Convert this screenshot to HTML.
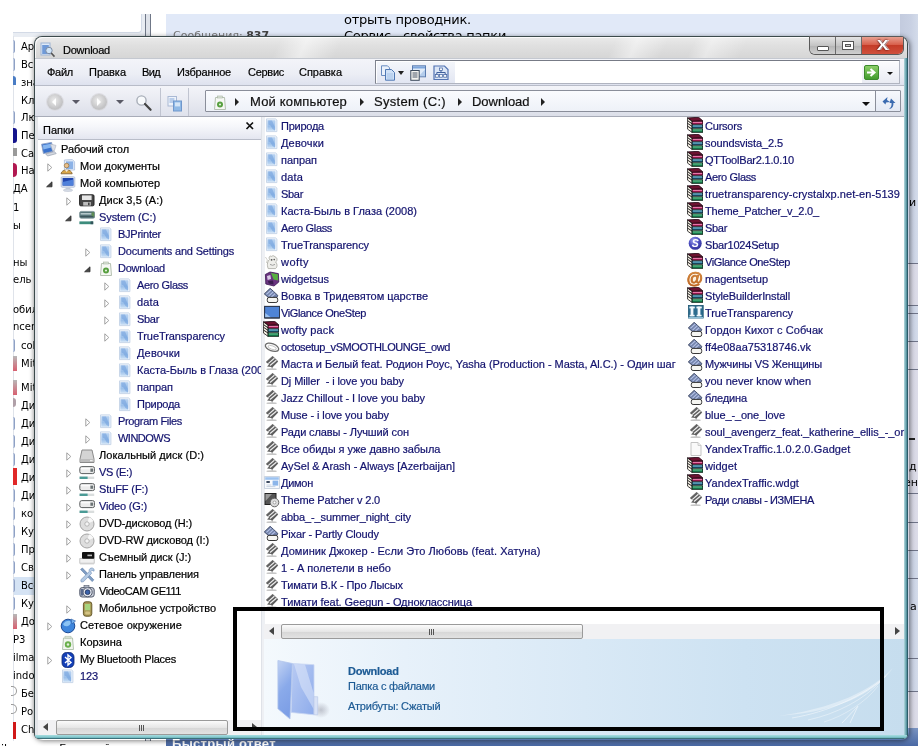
<!DOCTYPE html>
<html lang="ru"><head><meta charset="utf-8"><title>Download</title>
<style>
html,body{margin:0;padding:0;background:#fff;}
body{width:918px;height:746px;overflow:hidden;position:relative;font-family:"Liberation Sans",sans-serif;font-size:11px;}
#bg{will-change:transform;position:absolute;left:0;top:0;width:918px;height:746px;overflow:hidden}
.bt{position:absolute;white-space:nowrap;font-size:11px;line-height:16px;color:#000;font-family:"DejaVu Sans","Liberation Sans",sans-serif}
.t{position:absolute;white-space:pre;font-size:11px;line-height:15px;height:15px;-webkit-text-stroke:.2px currentColor}
.t.a{font-size:13px;line-height:20px;height:20px}
.ic{position:absolute;width:16px;height:16px;line-height:0}
#shadow{position:absolute;left:35px;top:38px;width:874px;height:702px;border-radius:8px;box-shadow:0 0 5px 1px rgba(0,0,0,.5)}
#win{will-change:transform;position:absolute;left:34px;top:36px;width:874px;height:703px;border-radius:8px 8px 5px 5px;background:#e4e6ea;overflow:hidden;box-shadow:inset 0 0 0 1px #3c4a4c}
#title{position:absolute;left:1px;top:1px;right:1px;height:21px;border-radius:7px 7px 0 0;box-shadow:inset 1px 1px 0 rgba(255,255,255,.8);background:linear-gradient(115deg,rgba(255,255,255,0) 28%,rgba(255,255,255,.5) 31%,rgba(255,255,255,0) 35%,rgba(255,255,255,0) 66%,rgba(255,255,255,.45) 68.5%,rgba(255,255,255,0) 72%,rgba(255,255,255,0) 75%,rgba(255,255,255,.4) 77%,rgba(255,255,255,0) 81%),linear-gradient(#eaeaea,#e0e0e0 40%,#d6d6d6)}
#capbtns{position:absolute;left:776px;top:1px;width:93px;height:17px;border-radius:0 0 5px 5px;box-shadow:0 0 0 1px #5a5a5a;overflow:hidden}
#bmin,#bmax,#bclose{position:absolute;top:0;height:17px}
#bmin{left:0;width:25px;background:linear-gradient(#e4e4e4,#c4c4c4 50%,#b4b4b4 51%,#cfcfcf);border-right:1px solid #6a6a6a}
#bmax{left:26px;width:25px;background:linear-gradient(#e4e4e4,#c4c4c4 50%,#b4b4b4 51%,#cfcfcf);border-right:1px solid #6a6a6a}
#bclose{left:52px;width:41px;background:linear-gradient(#e8a090,#d8604c 45%,#c43c28 50%,#d0503c)}
#bmin i{position:absolute;left:7px;top:9px;width:10px;height:3px;background:#fff;border:1px solid #555;border-radius:1px}
#bmax i{position:absolute;left:7px;top:5px;width:6px;height:3px;background:#ccc;border:2px solid #fff;outline:1px solid #555;box-shadow:inset 0 0 0 1px #555}
#bclose span{position:absolute;left:0;width:41px;text-align:center;top:-1px;font:bold 14px "Liberation Sans",sans-serif;color:#fff;text-shadow:0 0 2px #400,0 0 1px #400,1px 0 0 #fff;line-height:18px;transform:scaleX(1.25)}
#menubar{position:absolute;left:1px;top:22px;right:1px;height:27px;background:linear-gradient(#f3f4f9,#eceef5 55%,#dde1ee);border-top:1px solid #c4c8d0}
#menuwhite{position:absolute;left:341px;top:24px;width:523px;height:22px;background:#fff;border:1px solid #b0b4c0;border-top-color:#777b86;border-left-color:#80848f}
#gobtn{position:absolute;left:828px;top:26px;width:37px;height:21px;background:linear-gradient(#fbfbfd,#e9ebf3);}
#navbar{position:absolute;left:1px;top:49px;right:1px;height:30px;background:linear-gradient(#f3f4f9,#e6e8f0 60%,#dcdfe9);border-top:1px solid #b8bcc8;border-bottom:1px solid #a8acb8}
.navb{position:absolute;width:16px;height:16px;border-radius:50%;background:radial-gradient(circle at 45% 40%,#ececec,#c2c2c4 65%,#d4d4d8);box-shadow:0 0 0 1px #dcdce2}
.navb b{position:absolute;top:4px;width:0;height:0;border:4px solid transparent}
#foldersbtn{position:absolute;left:126px;top:52px;width:27px;height:28px;background:linear-gradient(#f2f3f8,#dfe2ec);border-left:1px solid #c0c4d0;border-right:1px solid #c0c4d0}
#addr{position:absolute;left:171px;top:54px;width:694px;height:20px;background:linear-gradient(#fafbfe,#eef1f8);border:1px solid #8a8e9a;border-radius:1px}
#refresh{position:absolute;left:841px;top:55px;width:24px;height:20px;border-left:1px solid #8a8e9a;background:linear-gradient(#f6f8fd,#e4e9f4)}
#content{position:absolute;left:4px;top:81px;right:4px;height:618px;background:#fff}
#fhead{position:absolute;left:4px;top:81px;width:223px;height:22px;background:linear-gradient(#ffffff,#f5f6fa 45%,#e4e6f0);border-bottom:1px solid #b9bdc9}
#split{position:absolute;left:227px;top:81px;width:3px;height:618px;background:#eef0f4;border-left:1px solid #dfe2e8}
.hs{position:absolute;height:15px;background:#f1f1f3}
.hth{position:absolute;top:0;height:13px;border:1px solid #9a9a9a;border-radius:2px;background:linear-gradient(#fbfbfb,#e6e6e6 50%,#d6d6d6 51%,#e2e2e2)}
.hth span{position:absolute;left:50%;top:4px;width:1px;height:6px;margin-left:-3px;background:#555;box-shadow:2px 0 0 #555,4px 0 0 #555}
.ar{position:absolute;top:3px;width:0;height:0;border:4px solid transparent}
.ar.l{left:5px;border-right:5px solid #444;border-left:none}
.ar.r{right:4px;border-left:5px solid #444;border-right:none}
#details{position:absolute;left:230px;top:603px;right:4px;height:96px;background:linear-gradient(90deg,#f4f9fd 0%,#e7f1fa 22%,#d9e9f6 50%,#cde2f2 75%,#c6ddee 100%)}
#treeclip{position:absolute;left:0;top:0;width:227px;height:684px;overflow:hidden}
#fr_r{position:absolute;right:0;top:22px;width:4px;bottom:0;background:linear-gradient(90deg,#b4d8de,#5c9aa6 60%,#173f4e)}
#fr_b{position:absolute;left:1px;right:1px;bottom:0;height:4px;background:linear-gradient(#a9dde0,#7cc4ca 60%,#1f4a56);border-radius:0 0 4px 4px}
#ann{position:absolute;left:233px;top:607px;width:643px;height:116px;border:4px solid #000}
</style></head>
<body>
<div id="bg">
<div style="position:absolute;left:13px;top:14px;width:137px;height:23px;background:#e9edf3"></div>
<div style="position:absolute;left:0px;top:0px;width:141px;height:32px;background:#fff;border-radius:0 0 4px 0;border-right:1px solid #d3dae6;border-bottom:1px solid #d3dae6"></div>
<div style="position:absolute;left:0px;top:0px;width:160px;height:14px;background:#fff"></div>
<div style="position:absolute;left:0px;top:0px;width:13px;height:40px;background:#fff"></div>
<div style="position:absolute;left:145px;top:14px;width:1px;height:732px;background:#6f7787"></div>
<div style="position:absolute;left:146px;top:14px;width:4px;height:732px;background:#dfe3ea"></div>
<div style="position:absolute;left:150px;top:14px;width:1px;height:732px;background:#6f7787"></div>
<div style="position:absolute;left:166px;top:14px;width:752px;height:732px;background:#e1e9f8"></div>
<div class="bt" style="left:173px;top:28px;color:#777;font-size:11px">Сообщения: <b style="color:#444">837</b></div>
<div class="bt" style="left:344px;top:12px;font-size:13px;letter-spacing:-.28px">отрыть проводник.</div>
<div class="bt" style="left:344px;top:28px;font-size:13px;letter-spacing:-.28px">Сервис - свойства папки</div>
<div style="position:absolute;left:13px;top:36px;width:1px;height:710px;background:#dfe3ea"></div>
<div class="bt" style="left:21px;top:39px;font-size:10px">Ар</div>
<div style="position:absolute;left:13px;top:40px;width:1px;height:13px;background:#c4cfe4;border-right:1px solid #8fa1c4;border-radius:0 2px 2px 0"></div>
<div class="bt" style="left:21px;top:57px;font-size:10px">Всп</div>
<div style="position:absolute;left:13px;top:58px;width:1px;height:13px;background:#c4cfe4;border-right:1px solid #8fa1c4;border-radius:0 2px 2px 0"></div>
<div class="bt" style="left:21px;top:75px;font-size:10px">зна</div>
<div style="position:absolute;left:13px;top:76px;width:3px;height:9px;background:#4a7cc4;border-radius:0 3px 0 0"></div>
<div class="bt" style="left:21px;top:93px;font-size:10px">Кл</div>
<div class="bt" style="left:21px;top:110px;font-size:10px">Лю</div>
<div style="position:absolute;left:13px;top:111px;width:1px;height:13px;background:#c4cfe4;border-right:1px solid #8fa1c4;border-radius:0 2px 2px 0"></div>
<div class="bt" style="left:21px;top:128px;font-size:10px">Пе</div>
<div style="position:absolute;left:13px;top:128px;width:4px;height:15px;background:#14148c;border-radius:0 3px 3px 0"></div>
<div class="bt" style="left:21px;top:146px;font-size:10px">Са</div>
<div style="position:absolute;left:13px;top:148px;width:4px;height:8px;background:#9a9a9a"></div>
<div class="bt" style="left:21px;top:163px;font-size:10px">На</div>
<div style="position:absolute;left:13px;top:163px;width:4px;height:14px;background:#b01850;border-radius:0 4px 4px 0"></div>
<div class="bt" style="left:13px;top:181px;font-size:10px">ДА</div>
<div class="bt" style="left:13px;top:200px;font-size:10px">1</div>
<div class="bt" style="left:13px;top:218px;font-size:10px">ы</div>
<div class="bt" style="left:13px;top:255px;font-size:10px">ны</div>
<div class="bt" style="left:13px;top:272px;font-size:10px">ель</div>
<div class="bt" style="left:13px;top:302px;font-size:10px">обил</div>
<div class="bt" style="left:13px;top:319px;font-size:10px">ncer</div>
<div class="bt" style="left:21px;top:338px;font-size:10px">col</div>
<div style="position:absolute;left:13px;top:339px;width:1px;height:13px;background:#c4cfe4;border-right:1px solid #8fa1c4;border-radius:0 2px 2px 0"></div>
<div class="bt" style="left:21px;top:356px;font-size:10px">Mit</div>
<div style="position:absolute;left:13px;top:356px;width:4px;height:15px;background:linear-gradient(#b8b8b8,#d86070)"></div>
<div class="bt" style="left:21px;top:380px;font-size:10px">Mit</div>
<div style="position:absolute;left:13px;top:380px;width:4px;height:15px;background:linear-gradient(#b8b8b8,#d86070)"></div>
<div class="bt" style="left:21px;top:398px;font-size:10px">Ди</div>
<div style="position:absolute;left:13px;top:398px;width:3px;height:9px;background:#b0a0a8;border-radius:0 4px 4px 0"></div>
<div class="bt" style="left:21px;top:416px;font-size:10px">Ди</div>
<div style="position:absolute;left:13px;top:417px;width:1px;height:13px;background:#c4cfe4;border-right:1px solid #8fa1c4;border-radius:0 2px 2px 0"></div>
<div class="bt" style="left:21px;top:434px;font-size:10px">Ди</div>
<div style="position:absolute;left:13px;top:435px;width:1px;height:13px;background:#c4cfe4;border-right:1px solid #8fa1c4;border-radius:0 2px 2px 0"></div>
<div class="bt" style="left:21px;top:452px;font-size:10px">Ди</div>
<div style="position:absolute;left:13px;top:453px;width:1px;height:13px;background:#c4cfe4;border-right:1px solid #8fa1c4;border-radius:0 2px 2px 0"></div>
<div class="bt" style="left:21px;top:470px;font-size:10px">Ди</div>
<div style="position:absolute;left:13px;top:468px;width:4px;height:17px;background:#e02828"></div>
<div class="bt" style="left:21px;top:488px;font-size:10px">Ди</div>
<div style="position:absolute;left:13px;top:489px;width:1px;height:13px;background:#c4cfe4;border-right:1px solid #8fa1c4;border-radius:0 2px 2px 0"></div>
<div class="bt" style="left:21px;top:506px;font-size:10px">ко.</div>
<div style="position:absolute;left:13px;top:507px;width:1px;height:13px;background:#c4cfe4;border-right:1px solid #8fa1c4;border-radius:0 2px 2px 0"></div>
<div class="bt" style="left:21px;top:524px;font-size:10px">Ку</div>
<div style="position:absolute;left:13px;top:525px;width:1px;height:13px;background:#c4cfe4;border-right:1px solid #8fa1c4;border-radius:0 2px 2px 0"></div>
<div class="bt" style="left:21px;top:542px;font-size:10px">Пр</div>
<div style="position:absolute;left:13px;top:543px;width:1px;height:13px;background:#c4cfe4;border-right:1px solid #8fa1c4;border-radius:0 2px 2px 0"></div>
<div class="bt" style="left:21px;top:560px;font-size:10px">Св</div>
<div style="position:absolute;left:13px;top:561px;width:1px;height:13px;background:#c4cfe4;border-right:1px solid #8fa1c4;border-radius:0 2px 2px 0"></div>
<div style="position:absolute;left:14px;top:577px;width:22px;height:18px;background:#d5e3f4"></div>
<div class="bt" style="left:21px;top:578px;font-size:10px">Все</div>
<div style="position:absolute;left:13px;top:579px;width:1px;height:13px;background:#c4cfe4;border-right:1px solid #8fa1c4;border-radius:0 2px 2px 0"></div>
<div class="bt" style="left:21px;top:596px;font-size:10px">Ку</div>
<div style="position:absolute;left:13px;top:597px;width:1px;height:13px;background:#c4cfe4;border-right:1px solid #8fa1c4;border-radius:0 2px 2px 0"></div>
<div class="bt" style="left:21px;top:614px;font-size:10px">До</div>
<div style="position:absolute;left:13px;top:614px;width:4px;height:15px;background:linear-gradient(#b8b8b8,#d86070)"></div>
<div class="bt" style="left:13px;top:632px;font-size:10px">Р3</div>
<div class="bt" style="left:13px;top:650px;font-size:10px">ilma</div>
<div class="bt" style="left:13px;top:668px;font-size:10px">indo</div>
<div class="bt" style="left:21px;top:686px;font-size:10px">Бе.</div>
<div style="position:absolute;left:11px;top:686px;width:5px;height:8px;border:1px solid #999;border-left:none;border-radius:0 5px 5px 0"></div>
<div class="bt" style="left:21px;top:704px;font-size:10px">Ро</div>
<div style="position:absolute;left:11px;top:704px;width:5px;height:8px;border:1px solid #999;border-left:none;border-radius:0 5px 5px 0"></div>
<div class="bt" style="left:21px;top:722px;font-size:10px">Ch</div>
<div style="position:absolute;left:13px;top:722px;width:3px;height:17px;background:#d01818"></div>
<div style="position:absolute;left:900px;top:14px;width:18px;height:732px;background:linear-gradient(90deg,#c3cbde,#c9d1e3 60%,#d3dbea)"></div>
<div style="position:absolute;left:900px;top:264px;width:18px;height:41px;background:linear-gradient(90deg,#d0d0de,#dcdce8)"></div>
<div style="position:absolute;left:900px;top:341px;width:18px;height:28px;background:linear-gradient(90deg,#d0d0de,#dcdce8)"></div>
<div style="position:absolute;left:900px;top:370px;width:18px;height:180px;background:linear-gradient(90deg,#d0d0de,#dcdce8)"></div>
<div style="position:absolute;left:900px;top:692px;width:18px;height:36px;background:linear-gradient(90deg,#d0d0de,#dcdce8)"></div>
<div style="position:absolute;left:908px;top:263px;width:10px;height:1px;background:#6f7488"></div>
<div style="position:absolute;left:908px;top:305px;width:10px;height:1px;background:#6f7488"></div>
<div style="position:absolute;left:908px;top:313px;width:10px;height:1px;background:#6f7488"></div>
<div style="position:absolute;left:908px;top:341px;width:10px;height:1px;background:#6f7488"></div>
<div style="position:absolute;left:908px;top:369px;width:10px;height:1px;background:#6f7488"></div>
<div style="position:absolute;left:908px;top:493px;width:10px;height:1px;background:#6f7488"></div>
<div style="position:absolute;left:908px;top:522px;width:10px;height:1px;background:#6f7488"></div>
<div style="position:absolute;left:908px;top:550px;width:10px;height:1px;background:#6f7488"></div>
<div style="position:absolute;left:908px;top:578px;width:10px;height:1px;background:#6f7488"></div>
<div style="position:absolute;left:908px;top:658px;width:10px;height:1px;background:#6f7488"></div>
<div style="position:absolute;left:908px;top:691px;width:10px;height:1px;background:#6f7488"></div>
<div style="position:absolute;left:909px;top:438px;width:6px;height:2px;background:#222"></div>
<div class="bt" style="left:909px;top:195px">и</div>
<div class="bt" style="left:909px;top:459px">д</div>
<div class="bt" style="left:904px;top:475px">ен</div>
<div class="bt" style="left:910px;top:599px">а</div>
<div style="position:absolute;left:0;top:741px;width:166px;height:5px;background:#fff"></div>
<div style="position:absolute;left:166px;top:728px;width:752px;height:18px;background:linear-gradient(#7a94c2,#4a69a4)"></div>
<div class="bt" style="left:172px;top:736px;color:#fff;font-weight:bold;font-size:13px;font-family:'Liberation Sans',sans-serif;letter-spacing:.3px">Быстрый ответ</div>
<div class="bt" style="left:1px;top:741px;font-size:11px">ilm <span style="margin-left:38px">Быстрый ответ</span></div>
</div>
<div id="shadow"></div>
<div id="win">
<div id="title"></div>
<div class="ic" style="left:6px;top:6px"><svg width="16" height="16" viewBox="0 0 16 16"><rect x="1" y="1" width="9" height="12" fill="#dfeaf8" stroke="#9db4d4" stroke-width="1"/><rect x="2.2" y="3" width="6.6" height="9" fill="#6f9ad8"/><circle cx="9" cy="8.5" r="3.2" fill="#cfe4f8" stroke="#7c8ca4" stroke-width="1"/><path d="M11.2 11 L14.5 14.6" stroke="#555" stroke-width="1.6"/></svg></div>
<div class="t" style="left:29px;top:7px;color:#000;letter-spacing:-0.240px;">Download</div>
<div id="capbtns"><div id="bmin"><i></i></div><div id="bmax"><i></i></div><div id="bclose"><span>X</span></div></div>
<div id="menubar"></div>
<div class="t" style="left:13px;top:29px;color:#000;letter-spacing:-0.262px;">Файл</div>
<div class="t" style="left:55px;top:29px;color:#000;letter-spacing:-0.029px;">Правка</div>
<div class="t" style="left:108px;top:29px;color:#000;letter-spacing:-0.635px;">Вид</div>
<div class="t" style="left:143px;top:29px;color:#000;letter-spacing:-0.194px;">Избранное</div>
<div class="t" style="left:214px;top:29px;color:#000;letter-spacing:-0.279px;">Сервис</div>
<div class="t" style="left:265px;top:29px;color:#000;letter-spacing:-0.022px;">Справка</div>
<div id="menuwhite"></div>
<div style="position:absolute;left:343px;top:26px;width:78px;height:21px;background:linear-gradient(#f4f6fb,#e2e6f2)"></div>
<div class="ic" style="left:346px;top:29px"><svg width="16" height="16" viewBox="0 0 16 16"><path d="M1.5 .8 L7.5 .8 L9.5 2.8 L9.5 10.5 L1.5 10.5Z" fill="#eaf1fb" stroke="#6a8cc0" stroke-width="1"/><path d="M5.5 4.5 L11.5 4.5 L14.5 7.5 L14.5 15.2 L5.5 15.2Z" fill="#cfe1f7" stroke="#4f78b4" stroke-width="1"/><path d="M7 9h6M7 11h6M7 13h6" stroke="#9cbbe4" stroke-width=".8"/></svg></div>
<div style="position:absolute;left:364px;top:35px;border:3px solid transparent;border-top:4px solid #222;border-bottom:none;width:0;height:0"></div>
<div class="ic" style="left:376px;top:29px"><svg width="16" height="16" viewBox="0 0 16 16"><rect x="2.5" y=".8" width="13" height="11" fill="#dfeaf8" stroke="#5a7cb0" stroke-width="1"/><rect x="3" y="1.3" width="12" height="2.2" fill="#7ea6dc"/><path d="M9 11 L15 4.5 L15 11Z" fill="#b4cdec"/><rect x=".8" y="5.5" width="8.4" height="9.8" fill="#f4f4f0" stroke="#3c4a5c" stroke-width="1"/><path d="M2.5 8h5M2.5 10h5M2.5 12h5" stroke="#4a5668" stroke-width="1"/></svg></div>
<div class="ic" style="left:399px;top:29px"><svg width="16" height="16" viewBox="0 0 16 16"><path d="M1 1 L11.5 1 L15 4.5 L15 14.5 L1 14.5Z" fill="#dbe6f7" stroke="#5273b2" stroke-width="1.2"/><path d="M8 4.5v3M3.8 10.5v-3h8.4v3" fill="none" stroke="#3f5f9c" stroke-width="1"/><rect x="6.4" y="3" width="3.2" height="2.4" fill="#f6f9fd" stroke="#3f5f9c" stroke-width=".7"/><rect x="2.3" y="9.6" width="3" height="2.6" fill="#f6f9fd" stroke="#3f5f9c" stroke-width=".7"/><rect x="10.7" y="9.6" width="3" height="2.6" fill="#f6f9fd" stroke="#3f5f9c" stroke-width=".7"/><rect x="6.5" y="9.6" width="3" height="2.6" fill="#f6f9fd" stroke="#3f5f9c" stroke-width=".7"/></svg></div>
<div id="gobtn"></div>
<div class="ic" style="left:830px;top:29px"><svg width="16" height="16" viewBox="0 0 16 16"><defs><linearGradient id="gg" x1="0" y1="0" x2="0" y2="1"><stop offset="0" stop-color="#8fd06a"/><stop offset="1" stop-color="#3f9a2c"/></linearGradient></defs><rect x=".5" y=".5" width="14" height="14" rx="1.5" fill="url(#gg)" stroke="#3c8a2c" stroke-width="1"/><path d="M3 7.5h6M6.5 4l4 3.5-4 3.5" fill="none" stroke="#fff" stroke-width="2"/></svg></div>
<div style="position:absolute;left:853px;top:36px;border:3px solid transparent;border-top:3px solid #111;width:0;height:0"></div>
<div id="navbar"></div>
<div class="navb" style="left:13px;top:58px"><b style="border-right-color:#fff;left:1px"></b></div>
<div style="position:absolute;left:38px;top:64px;border:4px solid transparent;border-top:4px solid #5a5a66;border-bottom:none;width:0;height:0"></div>
<div class="navb" style="left:57px;top:58px"><b style="border-left-color:#fff;left:6px"></b></div>
<div style="position:absolute;left:82px;top:64px;border:4px solid transparent;border-top:4px solid #5a5a66;border-bottom:none;width:0;height:0"></div>
<div class="ic" style="left:101px;top:58px"><svg width="18" height="18" viewBox="0 0 18 18"><circle cx="6.5" cy="6.5" r="4.6" fill="#f8fafc" stroke="#a8aeb8" stroke-width="1.4"/><path d="M10 10 L15.6 15.8" stroke="#444" stroke-width="2.2" stroke-linecap="round"/></svg></div>
<div id="foldersbtn"></div>
<div class="ic" style="left:132px;top:59px"><svg width="18" height="18" viewBox="0 0 18 18"><rect x="2" y="1.5" width="8.5" height="9.5" fill="#eef3fb" stroke="#aab9d4" stroke-width="1"/><rect x="3.4" y="3" width="5" height="5" fill="#b9cdea"/><rect x="7.5" y="6" width="8" height="10" fill="#8fb9e6" stroke="#6f97cc" stroke-width="1"/><rect x="9" y="7.4" width="5" height="4" fill="#d4e5f7"/></svg></div>
<div id="addr"></div>
<div class="ic" style="left:178px;top:59px"><svg width="16" height="16" viewBox="0 0 16 16">
<path d="M3.5 2.5 L12.5 2.5 L13.5 14.5 L2.5 14.5Z" fill="#f6f8f4" stroke="#b4c0b0" stroke-width="1"/>
<circle cx="8" cy="9.5" r="3" fill="#58a040"/>
<circle cx="8" cy="9.5" r="1.1" fill="#e4f0dc"/>
<rect x="5.4" y="1" width="5" height="2" fill="#dce4d8" stroke="#a8b4a4" stroke-width=".6"/>
</svg></div>
<div class="t a" style="left:216px;top:56px;color:#111;letter-spacing:0.183px;">Мой компьютер</div>
<div class="t a" style="left:340px;top:56px;color:#111;letter-spacing:0.307px;">System (C:)</div>
<div class="t a" style="left:438px;top:56px;color:#111;letter-spacing:-0.041px;">Download</div>
<div style="position:absolute;left:201px;top:62px;border:4px solid transparent;border-left:4px solid #222;border-right:none;width:0;height:0"></div>
<div style="position:absolute;left:326px;top:62px;border:4px solid transparent;border-left:4px solid #222;border-right:none;width:0;height:0"></div>
<div style="position:absolute;left:424px;top:62px;border:4px solid transparent;border-left:4px solid #222;border-right:none;width:0;height:0"></div>
<div style="position:absolute;left:507px;top:62px;border:4px solid transparent;border-left:4px solid #222;border-right:none;width:0;height:0"></div>
<div style="position:absolute;left:828px;top:66px;border:4px solid transparent;border-top:4px solid #111;border-bottom:none;width:0;height:0"></div>
<div id="refresh"></div>
<div class="ic" style="left:846px;top:58px"><svg width="18" height="18" viewBox="0 0 18 18"><path d="M2.5 7.5 L7.5 3 L7 6 L10 8 L6 8.5 L5.5 10.5Z" fill="#3a6ab0"/><path d="M15.5 9 L11 4.5 L9.5 9 L11.5 9 C12 12 10.5 14 9 15 C13 14.5 13.5 11.5 13.4 9Z" fill="#3a6ab0"/></svg></div>
<div id="content"></div>
<div id="fr_r"></div><div id="fr_b"></div>
<div id="fhead"></div>
<div class="t" style="left:9px;top:87px;color:#000;letter-spacing:0.013px;">Папки</div>
<div style="position:absolute;left:210px;top:84px;width:12px;height:12px"><svg width="12" height="12" viewBox="0 0 12 12"><path d="M2.5 2.5 L9 9 M9 2.5 L2.5 9" stroke="#111" stroke-width="1.7"/></svg></div>
<div id="split"></div>
<div id="treeclip">
<div class="ic" style="left:7px;top:106px"><svg width="16" height="16" viewBox="0 0 16 16">
<path d="M.6 2.2 L10.6 .4 L12 9.4 L2.4 11.6Z" fill="#3a72cc" stroke="#8fa2c4" stroke-width=".9"/>
<path d="M1.8 3.2 L9.8 1.8 L10.4 5.4 L2.4 7.6Z" fill="#86b6f0"/>
<path d="M9.4 2 L15 3.4 L13.4 8.6 L11.4 8.4Z" fill="#dcdfe6" stroke="#a9b0bf" stroke-width=".6"/>
<path d="M4.6 11.8 L13.4 9.6 L15.2 11.6 L6.6 14Z" fill="#d4d8e0" stroke="#959dad" stroke-width=".7"/>
</svg></div>
<div class="t" style="left:27px;top:106px;color:#000;letter-spacing:-0.089px;">Рабочий стол</div>
<div style="position:absolute;left:12px;top:126px;width:9px;height:9px"><svg width="9" height="9" viewBox="0 0 9 9"><path d="M1.8 .8 L5.8 4.5 L1.8 8.2Z" fill="#fff" stroke="#a2a2a2" stroke-width="1"/></svg></div>
<div class="ic" style="left:26px;top:123px"><svg width="16" height="16" viewBox="0 0 16 16">
<path d="M4.4 1 L12.4 .6 L14.6 2.8 L14.6 11 L4.4 11Z" fill="#e6eefa" stroke="#a9bcda" stroke-width=".8"/>
<rect x="6" y="2.4" width="7.2" height="7.6" fill="#8cb2e6"/>
<circle cx="6.6" cy="6.6" r="2.3" fill="#e9c08a" stroke="#96703a" stroke-width=".7"/>
<path d="M1 14.8 C1.6 9.6 11.6 9.6 12.2 14.8Z" fill="#d9a648" stroke="#7d5a26" stroke-width=".8"/>
<path d="M4.6 10.6 L6.6 13 L8.6 10.6Z" fill="#f4f0e6"/>
</svg></div>
<div class="t" style="left:46px;top:123px;color:#000;letter-spacing:-0.012px;">Мои документы</div>
<div style="position:absolute;left:11px;top:143px;width:9px;height:9px"><svg width="9" height="9" viewBox="0 0 9 9"><path d="M7 1.8 L7 6.8 L1.6 6.8Z" fill="#484848" stroke="#2c2c2c" stroke-width=".8"/></svg></div>
<div class="ic" style="left:26px;top:140px"><svg width="16" height="16" viewBox="0 0 16 16">
<rect x="1.2" y=".8" width="13.6" height="10.4" rx="1" fill="#dfe6f2" stroke="#b3bfd6" stroke-width=".9"/>
<rect x="2.6" y="2" width="10.8" height="7.6" fill="#2146ae"/>
<path d="M2.6 9.6 L2.6 6 L13.4 3.4 L13.4 9.6Z" fill="#4f80da"/>
<rect x="5.6" y="11.4" width="4.8" height="1.8" fill="#c7cedb"/>
<ellipse cx="8" cy="14.2" rx="4.6" ry="1.2" fill="#d9dee8" stroke="#b3bccb" stroke-width=".6"/>
</svg></div>
<div class="t" style="left:46px;top:140px;color:#000;">Мой компьютер</div>
<div style="position:absolute;left:31px;top:160px;width:9px;height:9px"><svg width="9" height="9" viewBox="0 0 9 9"><path d="M1.8 .8 L5.8 4.5 L1.8 8.2Z" fill="#fff" stroke="#a2a2a2" stroke-width="1"/></svg></div>
<div class="ic" style="left:45px;top:157px"><svg width="16" height="16" viewBox="0 0 16 16">
<rect x=".6" y="1.8" width="14.4" height="11" rx="1.2" fill="#474747" stroke="#242424" stroke-width="1"/>
<rect x="3" y="2.4" width="9.6" height="4.6" fill="#e6e6e6"/>
<rect x="4.2" y="9" width="7.6" height="3.6" fill="#bdbdbd"/>
<rect x="9" y="9.6" width="1.6" height="2.6" fill="#444"/>
</svg></div>
<div class="t" style="left:65px;top:157px;color:#000;letter-spacing:0.075px;">Диск 3,5 (A:)</div>
<div style="position:absolute;left:30px;top:177px;width:9px;height:9px"><svg width="9" height="9" viewBox="0 0 9 9"><path d="M7 1.8 L7 6.8 L1.6 6.8Z" fill="#484848" stroke="#2c2c2c" stroke-width=".8"/></svg></div>
<div class="ic" style="left:45px;top:174px"><svg width="16" height="16" viewBox="0 0 16 16">
<rect x=".6" y="1.4" width="15.2" height="6.8" rx="1.6" fill="#56757a" stroke="#7f979a" stroke-width=".8"/>
<rect x="1.6" y="3" width="11" height="1.6" fill="#b4c8cb"/>
<rect x="12.6" y="2.4" width="2.6" height="4.6" fill="#5e8c54"/>
<rect x="1.2" y="6" width="13" height="1.2" fill="#3c565c"/>
<rect x=".4" y="11.4" width="13.8" height="2.8" fill="#3d8c7c"/>
<rect x="11.6" y="11.4" width="2.6" height="2.8" fill="#34545a"/>
</svg></div>
<div class="t" style="left:65px;top:174px;color:#13136e;letter-spacing:-0.097px;">System (C:)</div>
<div class="ic" style="left:64px;top:191px"><svg width="16" height="16" viewBox="0 0 16 16">
<defs><linearGradient id="fg" x1="0" y1="0" x2="0" y2="1"><stop offset="0" stop-color="#b9d3f1"/><stop offset=".6" stop-color="#9cc0ea"/><stop offset="1" stop-color="#c9dff5"/></linearGradient></defs>
<path d="M2.5 .9 L11.6 .9 L12.9 2 L12.9 13.6 L2.5 13.6Z" fill="#f1f6fc" stroke="#c3d2e6" stroke-width=".9"/>
<rect x="3.3" y="2.2" width="7.8" height="10.6" fill="url(#fg)"/>
<path d="M4.2 2.6 L8 2.6 L11 9.5 L11 12.6 L8.5 11 L6.5 7.5 L4.5 6.5Z" fill="#6f9fdc" opacity=".55"/>
<path d="M11.1 2.2 L12.5 3.6 L12.3 10.5 L11.1 12.8Z" fill="#d4e3f5"/>
</svg></div>
<div class="t" style="left:84px;top:191px;color:#13136e;letter-spacing:-0.250px;">BJPrinter</div>
<div style="position:absolute;left:50px;top:211px;width:9px;height:9px"><svg width="9" height="9" viewBox="0 0 9 9"><path d="M1.8 .8 L5.8 4.5 L1.8 8.2Z" fill="#fff" stroke="#a2a2a2" stroke-width="1"/></svg></div>
<div class="ic" style="left:64px;top:208px"><svg width="16" height="16" viewBox="0 0 16 16">
<defs><linearGradient id="fg" x1="0" y1="0" x2="0" y2="1"><stop offset="0" stop-color="#b9d3f1"/><stop offset=".6" stop-color="#9cc0ea"/><stop offset="1" stop-color="#c9dff5"/></linearGradient></defs>
<path d="M2.5 .9 L11.6 .9 L12.9 2 L12.9 13.6 L2.5 13.6Z" fill="#f1f6fc" stroke="#c3d2e6" stroke-width=".9"/>
<rect x="3.3" y="2.2" width="7.8" height="10.6" fill="url(#fg)"/>
<path d="M4.2 2.6 L8 2.6 L11 9.5 L11 12.6 L8.5 11 L6.5 7.5 L4.5 6.5Z" fill="#6f9fdc" opacity=".55"/>
<path d="M11.1 2.2 L12.5 3.6 L12.3 10.5 L11.1 12.8Z" fill="#d4e3f5"/>
</svg></div>
<div class="t" style="left:84px;top:208px;color:#13136e;letter-spacing:-0.175px;">Documents and Settings</div>
<div style="position:absolute;left:49px;top:228px;width:9px;height:9px"><svg width="9" height="9" viewBox="0 0 9 9"><path d="M7 1.8 L7 6.8 L1.6 6.8Z" fill="#484848" stroke="#2c2c2c" stroke-width=".8"/></svg></div>
<div class="ic" style="left:64px;top:225px"><svg width="16" height="16" viewBox="0 0 16 16">
<path d="M3.5 2.5 L12.5 2.5 L13.5 14.5 L2.5 14.5Z" fill="#f6f8f4" stroke="#b4c0b0" stroke-width="1"/>
<circle cx="8" cy="9.5" r="3" fill="#58a040"/>
<circle cx="8" cy="9.5" r="1.1" fill="#e4f0dc"/>
<rect x="5.4" y="1" width="5" height="2" fill="#dce4d8" stroke="#a8b4a4" stroke-width=".6"/>
</svg></div>
<div class="t" style="left:84px;top:225px;color:#13136e;letter-spacing:-0.240px;">Download</div>
<div style="position:absolute;left:69px;top:245px;width:9px;height:9px"><svg width="9" height="9" viewBox="0 0 9 9"><path d="M1.8 .8 L5.8 4.5 L1.8 8.2Z" fill="#fff" stroke="#a2a2a2" stroke-width="1"/></svg></div>
<div class="ic" style="left:83px;top:242px"><svg width="16" height="16" viewBox="0 0 16 16">
<defs><linearGradient id="fg" x1="0" y1="0" x2="0" y2="1"><stop offset="0" stop-color="#b9d3f1"/><stop offset=".6" stop-color="#9cc0ea"/><stop offset="1" stop-color="#c9dff5"/></linearGradient></defs>
<path d="M2.5 .9 L11.6 .9 L12.9 2 L12.9 13.6 L2.5 13.6Z" fill="#f1f6fc" stroke="#c3d2e6" stroke-width=".9"/>
<rect x="3.3" y="2.2" width="7.8" height="10.6" fill="url(#fg)"/>
<path d="M4.2 2.6 L8 2.6 L11 9.5 L11 12.6 L8.5 11 L6.5 7.5 L4.5 6.5Z" fill="#6f9fdc" opacity=".55"/>
<path d="M11.1 2.2 L12.5 3.6 L12.3 10.5 L11.1 12.8Z" fill="#d4e3f5"/>
</svg></div>
<div class="t" style="left:103px;top:242px;color:#13136e;letter-spacing:-0.342px;">Aero Glass</div>
<div style="position:absolute;left:69px;top:262px;width:9px;height:9px"><svg width="9" height="9" viewBox="0 0 9 9"><path d="M1.8 .8 L5.8 4.5 L1.8 8.2Z" fill="#fff" stroke="#a2a2a2" stroke-width="1"/></svg></div>
<div class="ic" style="left:83px;top:259px"><svg width="16" height="16" viewBox="0 0 16 16">
<defs><linearGradient id="fg" x1="0" y1="0" x2="0" y2="1"><stop offset="0" stop-color="#b9d3f1"/><stop offset=".6" stop-color="#9cc0ea"/><stop offset="1" stop-color="#c9dff5"/></linearGradient></defs>
<path d="M2.5 .9 L11.6 .9 L12.9 2 L12.9 13.6 L2.5 13.6Z" fill="#f1f6fc" stroke="#c3d2e6" stroke-width=".9"/>
<rect x="3.3" y="2.2" width="7.8" height="10.6" fill="url(#fg)"/>
<path d="M4.2 2.6 L8 2.6 L11 9.5 L11 12.6 L8.5 11 L6.5 7.5 L4.5 6.5Z" fill="#6f9fdc" opacity=".55"/>
<path d="M11.1 2.2 L12.5 3.6 L12.3 10.5 L11.1 12.8Z" fill="#d4e3f5"/>
</svg></div>
<div class="t" style="left:103px;top:259px;color:#13136e;letter-spacing:0.145px;">data</div>
<div style="position:absolute;left:69px;top:279px;width:9px;height:9px"><svg width="9" height="9" viewBox="0 0 9 9"><path d="M1.8 .8 L5.8 4.5 L1.8 8.2Z" fill="#fff" stroke="#a2a2a2" stroke-width="1"/></svg></div>
<div class="ic" style="left:83px;top:276px"><svg width="16" height="16" viewBox="0 0 16 16">
<defs><linearGradient id="fg" x1="0" y1="0" x2="0" y2="1"><stop offset="0" stop-color="#b9d3f1"/><stop offset=".6" stop-color="#9cc0ea"/><stop offset="1" stop-color="#c9dff5"/></linearGradient></defs>
<path d="M2.5 .9 L11.6 .9 L12.9 2 L12.9 13.6 L2.5 13.6Z" fill="#f1f6fc" stroke="#c3d2e6" stroke-width=".9"/>
<rect x="3.3" y="2.2" width="7.8" height="10.6" fill="url(#fg)"/>
<path d="M4.2 2.6 L8 2.6 L11 9.5 L11 12.6 L8.5 11 L6.5 7.5 L4.5 6.5Z" fill="#6f9fdc" opacity=".55"/>
<path d="M11.1 2.2 L12.5 3.6 L12.3 10.5 L11.1 12.8Z" fill="#d4e3f5"/>
</svg></div>
<div class="t" style="left:103px;top:276px;color:#13136e;letter-spacing:-0.312px;">Sbar</div>
<div style="position:absolute;left:69px;top:296px;width:9px;height:9px"><svg width="9" height="9" viewBox="0 0 9 9"><path d="M1.8 .8 L5.8 4.5 L1.8 8.2Z" fill="#fff" stroke="#a2a2a2" stroke-width="1"/></svg></div>
<div class="ic" style="left:83px;top:293px"><svg width="16" height="16" viewBox="0 0 16 16">
<defs><linearGradient id="fg" x1="0" y1="0" x2="0" y2="1"><stop offset="0" stop-color="#b9d3f1"/><stop offset=".6" stop-color="#9cc0ea"/><stop offset="1" stop-color="#c9dff5"/></linearGradient></defs>
<path d="M2.5 .9 L11.6 .9 L12.9 2 L12.9 13.6 L2.5 13.6Z" fill="#f1f6fc" stroke="#c3d2e6" stroke-width=".9"/>
<rect x="3.3" y="2.2" width="7.8" height="10.6" fill="url(#fg)"/>
<path d="M4.2 2.6 L8 2.6 L11 9.5 L11 12.6 L8.5 11 L6.5 7.5 L4.5 6.5Z" fill="#6f9fdc" opacity=".55"/>
<path d="M11.1 2.2 L12.5 3.6 L12.3 10.5 L11.1 12.8Z" fill="#d4e3f5"/>
</svg></div>
<div class="t" style="left:103px;top:293px;color:#13136e;letter-spacing:-0.066px;">TrueTransparency</div>
<div class="ic" style="left:83px;top:310px"><svg width="16" height="16" viewBox="0 0 16 16">
<defs><linearGradient id="fg" x1="0" y1="0" x2="0" y2="1"><stop offset="0" stop-color="#b9d3f1"/><stop offset=".6" stop-color="#9cc0ea"/><stop offset="1" stop-color="#c9dff5"/></linearGradient></defs>
<path d="M2.5 .9 L11.6 .9 L12.9 2 L12.9 13.6 L2.5 13.6Z" fill="#f1f6fc" stroke="#c3d2e6" stroke-width=".9"/>
<rect x="3.3" y="2.2" width="7.8" height="10.6" fill="url(#fg)"/>
<path d="M4.2 2.6 L8 2.6 L11 9.5 L11 12.6 L8.5 11 L6.5 7.5 L4.5 6.5Z" fill="#6f9fdc" opacity=".55"/>
<path d="M11.1 2.2 L12.5 3.6 L12.3 10.5 L11.1 12.8Z" fill="#d4e3f5"/>
</svg></div>
<div class="t" style="left:103px;top:310px;color:#13136e;letter-spacing:0.163px;">Девочки</div>
<div class="ic" style="left:83px;top:327px"><svg width="16" height="16" viewBox="0 0 16 16">
<defs><linearGradient id="fg" x1="0" y1="0" x2="0" y2="1"><stop offset="0" stop-color="#b9d3f1"/><stop offset=".6" stop-color="#9cc0ea"/><stop offset="1" stop-color="#c9dff5"/></linearGradient></defs>
<path d="M2.5 .9 L11.6 .9 L12.9 2 L12.9 13.6 L2.5 13.6Z" fill="#f1f6fc" stroke="#c3d2e6" stroke-width=".9"/>
<rect x="3.3" y="2.2" width="7.8" height="10.6" fill="url(#fg)"/>
<path d="M4.2 2.6 L8 2.6 L11 9.5 L11 12.6 L8.5 11 L6.5 7.5 L4.5 6.5Z" fill="#6f9fdc" opacity=".55"/>
<path d="M11.1 2.2 L12.5 3.6 L12.3 10.5 L11.1 12.8Z" fill="#d4e3f5"/>
</svg></div>
<div class="t" style="left:103px;top:327px;color:#13136e;letter-spacing:0.011px;">Каста-Быль в Глаза (2008)</div>
<div class="ic" style="left:83px;top:344px"><svg width="16" height="16" viewBox="0 0 16 16">
<defs><linearGradient id="fg" x1="0" y1="0" x2="0" y2="1"><stop offset="0" stop-color="#b9d3f1"/><stop offset=".6" stop-color="#9cc0ea"/><stop offset="1" stop-color="#c9dff5"/></linearGradient></defs>
<path d="M2.5 .9 L11.6 .9 L12.9 2 L12.9 13.6 L2.5 13.6Z" fill="#f1f6fc" stroke="#c3d2e6" stroke-width=".9"/>
<rect x="3.3" y="2.2" width="7.8" height="10.6" fill="url(#fg)"/>
<path d="M4.2 2.6 L8 2.6 L11 9.5 L11 12.6 L8.5 11 L6.5 7.5 L4.5 6.5Z" fill="#6f9fdc" opacity=".55"/>
<path d="M11.1 2.2 L12.5 3.6 L12.3 10.5 L11.1 12.8Z" fill="#d4e3f5"/>
</svg></div>
<div class="t" style="left:103px;top:344px;color:#13136e;letter-spacing:-0.039px;">папрап</div>
<div class="ic" style="left:83px;top:361px"><svg width="16" height="16" viewBox="0 0 16 16">
<defs><linearGradient id="fg" x1="0" y1="0" x2="0" y2="1"><stop offset="0" stop-color="#b9d3f1"/><stop offset=".6" stop-color="#9cc0ea"/><stop offset="1" stop-color="#c9dff5"/></linearGradient></defs>
<path d="M2.5 .9 L11.6 .9 L12.9 2 L12.9 13.6 L2.5 13.6Z" fill="#f1f6fc" stroke="#c3d2e6" stroke-width=".9"/>
<rect x="3.3" y="2.2" width="7.8" height="10.6" fill="url(#fg)"/>
<path d="M4.2 2.6 L8 2.6 L11 9.5 L11 12.6 L8.5 11 L6.5 7.5 L4.5 6.5Z" fill="#6f9fdc" opacity=".55"/>
<path d="M11.1 2.2 L12.5 3.6 L12.3 10.5 L11.1 12.8Z" fill="#d4e3f5"/>
</svg></div>
<div class="t" style="left:103px;top:361px;color:#13136e;letter-spacing:-0.243px;">Природа</div>
<div style="position:absolute;left:50px;top:381px;width:9px;height:9px"><svg width="9" height="9" viewBox="0 0 9 9"><path d="M1.8 .8 L5.8 4.5 L1.8 8.2Z" fill="#fff" stroke="#a2a2a2" stroke-width="1"/></svg></div>
<div class="ic" style="left:64px;top:378px"><svg width="16" height="16" viewBox="0 0 16 16">
<defs><linearGradient id="fg" x1="0" y1="0" x2="0" y2="1"><stop offset="0" stop-color="#b9d3f1"/><stop offset=".6" stop-color="#9cc0ea"/><stop offset="1" stop-color="#c9dff5"/></linearGradient></defs>
<path d="M2.5 .9 L11.6 .9 L12.9 2 L12.9 13.6 L2.5 13.6Z" fill="#f1f6fc" stroke="#c3d2e6" stroke-width=".9"/>
<rect x="3.3" y="2.2" width="7.8" height="10.6" fill="url(#fg)"/>
<path d="M4.2 2.6 L8 2.6 L11 9.5 L11 12.6 L8.5 11 L6.5 7.5 L4.5 6.5Z" fill="#6f9fdc" opacity=".55"/>
<path d="M11.1 2.2 L12.5 3.6 L12.3 10.5 L11.1 12.8Z" fill="#d4e3f5"/>
</svg></div>
<div class="t" style="left:84px;top:378px;color:#13136e;letter-spacing:-0.344px;">Program Files</div>
<div style="position:absolute;left:50px;top:398px;width:9px;height:9px"><svg width="9" height="9" viewBox="0 0 9 9"><path d="M1.8 .8 L5.8 4.5 L1.8 8.2Z" fill="#fff" stroke="#a2a2a2" stroke-width="1"/></svg></div>
<div class="ic" style="left:64px;top:395px"><svg width="16" height="16" viewBox="0 0 16 16">
<defs><linearGradient id="fg" x1="0" y1="0" x2="0" y2="1"><stop offset="0" stop-color="#b9d3f1"/><stop offset=".6" stop-color="#9cc0ea"/><stop offset="1" stop-color="#c9dff5"/></linearGradient></defs>
<path d="M2.5 .9 L11.6 .9 L12.9 2 L12.9 13.6 L2.5 13.6Z" fill="#f1f6fc" stroke="#c3d2e6" stroke-width=".9"/>
<rect x="3.3" y="2.2" width="7.8" height="10.6" fill="url(#fg)"/>
<path d="M4.2 2.6 L8 2.6 L11 9.5 L11 12.6 L8.5 11 L6.5 7.5 L4.5 6.5Z" fill="#6f9fdc" opacity=".55"/>
<path d="M11.1 2.2 L12.5 3.6 L12.3 10.5 L11.1 12.8Z" fill="#d4e3f5"/>
</svg></div>
<div class="t" style="left:84px;top:395px;color:#13136e;letter-spacing:-0.516px;">WINDOWS</div>
<div style="position:absolute;left:31px;top:415px;width:9px;height:9px"><svg width="9" height="9" viewBox="0 0 9 9"><path d="M1.8 .8 L5.8 4.5 L1.8 8.2Z" fill="#fff" stroke="#a2a2a2" stroke-width="1"/></svg></div>
<div class="ic" style="left:45px;top:412px"><svg width="16" height="16" viewBox="0 0 16 16">
<path d="M3 2 L13 2 L15 11 L15 14.5 L1 14.5 L1 11Z" fill="#d4d4d4" stroke="#8a8a8a" stroke-width="1"/>
<rect x="1.5" y="11" width="13" height="3" fill="#bcbcbc"/>
<rect x="11" y="12" width="2.6" height="1.2" fill="#eee"/>
</svg></div>
<div class="t" style="left:65px;top:412px;color:#000;letter-spacing:0.047px;">Локальный диск (D:)</div>
<div style="position:absolute;left:31px;top:432px;width:9px;height:9px"><svg width="9" height="9" viewBox="0 0 9 9"><path d="M1.8 .8 L5.8 4.5 L1.8 8.2Z" fill="#fff" stroke="#a2a2a2" stroke-width="1"/></svg></div>
<div class="ic" style="left:45px;top:429px"><svg width="16" height="16" viewBox="0 0 16 16">
<rect x=".8" y="1.6" width="14.8" height="7" rx="2" fill="#ececec" stroke="#5c5f60" stroke-width="1"/>
<rect x="2" y="2.8" width="9" height="1.6" fill="#fbfbfb"/>
<rect x="11.4" y="3.6" width="2.8" height="3.2" fill="#6c7476"/>
<rect x=".6" y="11.6" width="14.6" height="2.4" fill="#d9dddd"/>
<rect x=".6" y="11.6" width="8" height="2.4" fill="#4b9b96"/>
</svg></div>
<div class="t" style="left:65px;top:429px;color:#13136e;letter-spacing:-0.350px;">VS (E:)</div>
<div style="position:absolute;left:31px;top:449px;width:9px;height:9px"><svg width="9" height="9" viewBox="0 0 9 9"><path d="M1.8 .8 L5.8 4.5 L1.8 8.2Z" fill="#fff" stroke="#a2a2a2" stroke-width="1"/></svg></div>
<div class="ic" style="left:45px;top:446px"><svg width="16" height="16" viewBox="0 0 16 16">
<rect x=".8" y="1.6" width="14.8" height="7" rx="2" fill="#ececec" stroke="#5c5f60" stroke-width="1"/>
<rect x="2" y="2.8" width="9" height="1.6" fill="#fbfbfb"/>
<rect x="11.4" y="3.6" width="2.8" height="3.2" fill="#6c7476"/>
<rect x=".6" y="11.6" width="14.6" height="2.4" fill="#d9dddd"/>
<rect x=".6" y="11.6" width="8" height="2.4" fill="#4b9b96"/>
</svg></div>
<div class="t" style="left:65px;top:446px;color:#13136e;letter-spacing:-0.111px;">StuFF (F:)</div>
<div style="position:absolute;left:31px;top:466px;width:9px;height:9px"><svg width="9" height="9" viewBox="0 0 9 9"><path d="M1.8 .8 L5.8 4.5 L1.8 8.2Z" fill="#fff" stroke="#a2a2a2" stroke-width="1"/></svg></div>
<div class="ic" style="left:45px;top:463px"><svg width="16" height="16" viewBox="0 0 16 16">
<rect x=".8" y="1.6" width="14.8" height="7" rx="2" fill="#ececec" stroke="#5c5f60" stroke-width="1"/>
<rect x="2" y="2.8" width="9" height="1.6" fill="#fbfbfb"/>
<rect x="11.4" y="3.6" width="2.8" height="3.2" fill="#6c7476"/>
<rect x=".6" y="11.6" width="14.6" height="2.4" fill="#d9dddd"/>
<rect x=".6" y="11.6" width="8" height="2.4" fill="#4b9b96"/>
</svg></div>
<div class="t" style="left:65px;top:463px;color:#13136e;letter-spacing:-0.194px;">Video (G:)</div>
<div style="position:absolute;left:31px;top:483px;width:9px;height:9px"><svg width="9" height="9" viewBox="0 0 9 9"><path d="M1.8 .8 L5.8 4.5 L1.8 8.2Z" fill="#fff" stroke="#a2a2a2" stroke-width="1"/></svg></div>
<div class="ic" style="left:45px;top:480px"><svg width="16" height="16" viewBox="0 0 16 16">
<circle cx="8" cy="8" r="7" fill="#dedede" stroke="#a4a4a4" stroke-width="1"/>
<path d="M8 8 L14.5 5 A7 7 0 0 0 10 1.3Z" fill="#f8f8f8"/>
<circle cx="8" cy="8" r="2.2" fill="#f4f4f4" stroke="#aaa" stroke-width=".8"/>
</svg></div>
<div class="t" style="left:65px;top:480px;color:#000;letter-spacing:-0.142px;">DVD-дисковод (H:)</div>
<div style="position:absolute;left:31px;top:500px;width:9px;height:9px"><svg width="9" height="9" viewBox="0 0 9 9"><path d="M1.8 .8 L5.8 4.5 L1.8 8.2Z" fill="#fff" stroke="#a2a2a2" stroke-width="1"/></svg></div>
<div class="ic" style="left:45px;top:497px"><svg width="16" height="16" viewBox="0 0 16 16">
<circle cx="8" cy="8" r="7" fill="#dedede" stroke="#a4a4a4" stroke-width="1"/>
<path d="M8 8 L14.5 5 A7 7 0 0 0 10 1.3Z" fill="#f8f8f8"/>
<circle cx="8" cy="8" r="2.2" fill="#f4f4f4" stroke="#aaa" stroke-width=".8"/>
</svg></div>
<div class="t" style="left:65px;top:497px;color:#000;letter-spacing:-0.085px;">DVD-RW дисковод (I:)</div>
<div style="position:absolute;left:31px;top:517px;width:9px;height:9px"><svg width="9" height="9" viewBox="0 0 9 9"><path d="M1.8 .8 L5.8 4.5 L1.8 8.2Z" fill="#fff" stroke="#a2a2a2" stroke-width="1"/></svg></div>
<div class="ic" style="left:45px;top:514px"><svg width="16" height="16" viewBox="0 0 16 16">
<rect x=".8" y="8.6" width="14.4" height="4.6" fill="#f0f0f0" stroke="#b9b9b9" stroke-width=".8"/>
<rect x="3" y="2" width="12.4" height="6.8" rx="1" fill="#121212"/>
<rect x="8.4" y="4.6" width="4.6" height="1.6" fill="#bdbdbd"/>
<rect x="1" y="13.4" width="14" height="1" fill="#cfcfcf"/>
</svg></div>
<div class="t" style="left:65px;top:514px;color:#000;letter-spacing:-0.088px;">Съемный диск (J:)</div>
<div style="position:absolute;left:31px;top:534px;width:9px;height:9px"><svg width="9" height="9" viewBox="0 0 9 9"><path d="M1.8 .8 L5.8 4.5 L1.8 8.2Z" fill="#fff" stroke="#a2a2a2" stroke-width="1"/></svg></div>
<div class="ic" style="left:45px;top:531px"><svg width="16" height="16" viewBox="0 0 16 16">
<path d="M1.6 2.4 L3.4 1 L14.8 12.8 L13.2 14.6Z" fill="#7f9dc4" stroke="#5878a2" stroke-width=".6"/>
<path d="M12.2 1 C14.4 .6 15.6 2.4 15 4.2 L13 3.2 L11.8 4.6 L12.6 6.4 L4.4 14.8 L2.2 15 L1.8 12.8 L10.2 4.6 C9.8 3 10.6 1.4 12.2 1Z" fill="#b4cae4" stroke="#6f8db6" stroke-width=".6"/>
</svg></div>
<div class="t" style="left:65px;top:531px;color:#000;letter-spacing:-0.062px;">Панель управления</div>
<div class="ic" style="left:45px;top:548px"><svg width="16" height="16" viewBox="0 0 16 16">
<rect x=".8" y="3.6" width="14.4" height="9.4" rx="2.4" fill="#c9ced8" stroke="#50586a" stroke-width="1"/>
<circle cx="8.6" cy="8.2" r="4.6" fill="#e4e8f0" stroke="#50586a" stroke-width="1"/>
<circle cx="8.6" cy="8.2" r="2.4" fill="#3a62aa" stroke="#1e2e56" stroke-width=".8"/>
<rect x="1.6" y="5" width="2.6" height="6.6" fill="#5a6a8c"/>
<rect x="5" y="1.6" width="5" height="2.2" fill="#aeb6c4" stroke="#50586a" stroke-width=".6"/>
</svg></div>
<div class="t" style="left:65px;top:548px;color:#000;letter-spacing:-0.433px;">VideoCAM GE111</div>
<div style="position:absolute;left:31px;top:568px;width:9px;height:9px"><svg width="9" height="9" viewBox="0 0 9 9"><path d="M1.8 .8 L5.8 4.5 L1.8 8.2Z" fill="#fff" stroke="#a2a2a2" stroke-width="1"/></svg></div>
<div class="ic" style="left:45px;top:565px"><svg width="16" height="16" viewBox="0 0 16 16">
<rect x="4.4" y=".8" width="8.4" height="14.4" rx="2.4" fill="#ab9a58" stroke="#5c4e1e" stroke-width=".9"/>
<rect x="6" y="3" width="5.2" height="6.2" fill="#a6d47e"/>
<rect x="6.2" y="10.6" width="4.8" height="3" rx="1" fill="#d4c484"/>
</svg></div>
<div class="t" style="left:65px;top:565px;color:#000;letter-spacing:-0.052px;">Мобильное устройство</div>
<div style="position:absolute;left:12px;top:585px;width:9px;height:9px"><svg width="9" height="9" viewBox="0 0 9 9"><path d="M1.8 .8 L5.8 4.5 L1.8 8.2Z" fill="#fff" stroke="#a2a2a2" stroke-width="1"/></svg></div>
<div class="ic" style="left:26px;top:582px"><svg width="16" height="16" viewBox="0 0 16 16">
<circle cx="8" cy="8" r="6.8" fill="#3f86dc" stroke="#1c4a94" stroke-width="1"/>
<path d="M3 6 q3-4 7-3 q2 3-2 5 q-4 1-5-2Z" fill="#8cc4f4"/>
<path d="M11 1 L15.5 3 L12 6Z" fill="#78b4f0" stroke="#2c5ca4" stroke-width=".6"/>
</svg></div>
<div class="t" style="left:46px;top:582px;color:#000;letter-spacing:0.111px;">Сетевое окружение</div>
<div class="ic" style="left:26px;top:599px"><svg width="16" height="16" viewBox="0 0 16 16">
<path d="M3.5 3 L12.5 3 L13.5 14.5 L2.5 14.5Z" fill="#f2f6f0" stroke="#b4c4b0" stroke-width="1"/>
<circle cx="8" cy="9.5" r="3.2" fill="#6ab04c"/>
<circle cx="8" cy="9.5" r="1.2" fill="#e4f0dc"/>
<rect x="5" y="1.2" width="6" height="2" fill="#dce4d8" stroke="#b4c4b0" stroke-width=".6"/>
</svg></div>
<div class="t" style="left:46px;top:599px;color:#000;letter-spacing:0.013px;">Корзина</div>
<div style="position:absolute;left:12px;top:619px;width:9px;height:9px"><svg width="9" height="9" viewBox="0 0 9 9"><path d="M1.8 .8 L5.8 4.5 L1.8 8.2Z" fill="#fff" stroke="#a2a2a2" stroke-width="1"/></svg></div>
<div class="ic" style="left:26px;top:616px"><svg width="16" height="16" viewBox="0 0 16 16">
<rect x="2" y=".5" width="12" height="15" rx="4.5" fill="#1440b8" stroke="#0a2470" stroke-width=".8"/>
<path d="M5 5 L11 10.5 L8 13 L8 3 L11 5.5 L5 11" fill="none" stroke="#fff" stroke-width="1.4"/>
</svg></div>
<div class="t" style="left:46px;top:616px;color:#000;letter-spacing:-0.225px;">My Bluetooth Places</div>
<div class="ic" style="left:26px;top:633px"><svg width="16" height="16" viewBox="0 0 16 16">
<defs><linearGradient id="fg" x1="0" y1="0" x2="0" y2="1"><stop offset="0" stop-color="#b9d3f1"/><stop offset=".6" stop-color="#9cc0ea"/><stop offset="1" stop-color="#c9dff5"/></linearGradient></defs>
<path d="M2.5 .9 L11.6 .9 L12.9 2 L12.9 13.6 L2.5 13.6Z" fill="#f1f6fc" stroke="#c3d2e6" stroke-width=".9"/>
<rect x="3.3" y="2.2" width="7.8" height="10.6" fill="url(#fg)"/>
<path d="M4.2 2.6 L8 2.6 L11 9.5 L11 12.6 L8.5 11 L6.5 7.5 L4.5 6.5Z" fill="#6f9fdc" opacity=".55"/>
<path d="M11.1 2.2 L12.5 3.6 L12.3 10.5 L11.1 12.8Z" fill="#d4e3f5"/>
</svg></div>
<div class="t" style="left:46px;top:633px;color:#13136e;letter-spacing:-0.120px;">123</div>
</div>
<div class="ic" style="left:230px;top:82px"><svg width="16" height="16" viewBox="0 0 16 16">
<defs><linearGradient id="fg" x1="0" y1="0" x2="0" y2="1"><stop offset="0" stop-color="#b9d3f1"/><stop offset=".6" stop-color="#9cc0ea"/><stop offset="1" stop-color="#c9dff5"/></linearGradient></defs>
<path d="M2.5 .9 L11.6 .9 L12.9 2 L12.9 13.6 L2.5 13.6Z" fill="#f1f6fc" stroke="#c3d2e6" stroke-width=".9"/>
<rect x="3.3" y="2.2" width="7.8" height="10.6" fill="url(#fg)"/>
<path d="M4.2 2.6 L8 2.6 L11 9.5 L11 12.6 L8.5 11 L6.5 7.5 L4.5 6.5Z" fill="#6f9fdc" opacity=".55"/>
<path d="M11.1 2.2 L12.5 3.6 L12.3 10.5 L11.1 12.8Z" fill="#d4e3f5"/>
</svg></div>
<div class="t" style="left:247px;top:83px;color:#13136e;letter-spacing:-0.243px;">Природа</div>
<div class="ic" style="left:230px;top:99px"><svg width="16" height="16" viewBox="0 0 16 16">
<defs><linearGradient id="fg" x1="0" y1="0" x2="0" y2="1"><stop offset="0" stop-color="#b9d3f1"/><stop offset=".6" stop-color="#9cc0ea"/><stop offset="1" stop-color="#c9dff5"/></linearGradient></defs>
<path d="M2.5 .9 L11.6 .9 L12.9 2 L12.9 13.6 L2.5 13.6Z" fill="#f1f6fc" stroke="#c3d2e6" stroke-width=".9"/>
<rect x="3.3" y="2.2" width="7.8" height="10.6" fill="url(#fg)"/>
<path d="M4.2 2.6 L8 2.6 L11 9.5 L11 12.6 L8.5 11 L6.5 7.5 L4.5 6.5Z" fill="#6f9fdc" opacity=".55"/>
<path d="M11.1 2.2 L12.5 3.6 L12.3 10.5 L11.1 12.8Z" fill="#d4e3f5"/>
</svg></div>
<div class="t" style="left:247px;top:100px;color:#13136e;letter-spacing:0.163px;">Девочки</div>
<div class="ic" style="left:230px;top:116px"><svg width="16" height="16" viewBox="0 0 16 16">
<defs><linearGradient id="fg" x1="0" y1="0" x2="0" y2="1"><stop offset="0" stop-color="#b9d3f1"/><stop offset=".6" stop-color="#9cc0ea"/><stop offset="1" stop-color="#c9dff5"/></linearGradient></defs>
<path d="M2.5 .9 L11.6 .9 L12.9 2 L12.9 13.6 L2.5 13.6Z" fill="#f1f6fc" stroke="#c3d2e6" stroke-width=".9"/>
<rect x="3.3" y="2.2" width="7.8" height="10.6" fill="url(#fg)"/>
<path d="M4.2 2.6 L8 2.6 L11 9.5 L11 12.6 L8.5 11 L6.5 7.5 L4.5 6.5Z" fill="#6f9fdc" opacity=".55"/>
<path d="M11.1 2.2 L12.5 3.6 L12.3 10.5 L11.1 12.8Z" fill="#d4e3f5"/>
</svg></div>
<div class="t" style="left:247px;top:117px;color:#13136e;letter-spacing:-0.039px;">папрап</div>
<div class="ic" style="left:230px;top:133px"><svg width="16" height="16" viewBox="0 0 16 16">
<defs><linearGradient id="fg" x1="0" y1="0" x2="0" y2="1"><stop offset="0" stop-color="#b9d3f1"/><stop offset=".6" stop-color="#9cc0ea"/><stop offset="1" stop-color="#c9dff5"/></linearGradient></defs>
<path d="M2.5 .9 L11.6 .9 L12.9 2 L12.9 13.6 L2.5 13.6Z" fill="#f1f6fc" stroke="#c3d2e6" stroke-width=".9"/>
<rect x="3.3" y="2.2" width="7.8" height="10.6" fill="url(#fg)"/>
<path d="M4.2 2.6 L8 2.6 L11 9.5 L11 12.6 L8.5 11 L6.5 7.5 L4.5 6.5Z" fill="#6f9fdc" opacity=".55"/>
<path d="M11.1 2.2 L12.5 3.6 L12.3 10.5 L11.1 12.8Z" fill="#d4e3f5"/>
</svg></div>
<div class="t" style="left:247px;top:134px;color:#13136e;letter-spacing:0.145px;">data</div>
<div class="ic" style="left:230px;top:150px"><svg width="16" height="16" viewBox="0 0 16 16">
<defs><linearGradient id="fg" x1="0" y1="0" x2="0" y2="1"><stop offset="0" stop-color="#b9d3f1"/><stop offset=".6" stop-color="#9cc0ea"/><stop offset="1" stop-color="#c9dff5"/></linearGradient></defs>
<path d="M2.5 .9 L11.6 .9 L12.9 2 L12.9 13.6 L2.5 13.6Z" fill="#f1f6fc" stroke="#c3d2e6" stroke-width=".9"/>
<rect x="3.3" y="2.2" width="7.8" height="10.6" fill="url(#fg)"/>
<path d="M4.2 2.6 L8 2.6 L11 9.5 L11 12.6 L8.5 11 L6.5 7.5 L4.5 6.5Z" fill="#6f9fdc" opacity=".55"/>
<path d="M11.1 2.2 L12.5 3.6 L12.3 10.5 L11.1 12.8Z" fill="#d4e3f5"/>
</svg></div>
<div class="t" style="left:247px;top:151px;color:#13136e;letter-spacing:-0.312px;">Sbar</div>
<div class="ic" style="left:230px;top:167px"><svg width="16" height="16" viewBox="0 0 16 16">
<defs><linearGradient id="fg" x1="0" y1="0" x2="0" y2="1"><stop offset="0" stop-color="#b9d3f1"/><stop offset=".6" stop-color="#9cc0ea"/><stop offset="1" stop-color="#c9dff5"/></linearGradient></defs>
<path d="M2.5 .9 L11.6 .9 L12.9 2 L12.9 13.6 L2.5 13.6Z" fill="#f1f6fc" stroke="#c3d2e6" stroke-width=".9"/>
<rect x="3.3" y="2.2" width="7.8" height="10.6" fill="url(#fg)"/>
<path d="M4.2 2.6 L8 2.6 L11 9.5 L11 12.6 L8.5 11 L6.5 7.5 L4.5 6.5Z" fill="#6f9fdc" opacity=".55"/>
<path d="M11.1 2.2 L12.5 3.6 L12.3 10.5 L11.1 12.8Z" fill="#d4e3f5"/>
</svg></div>
<div class="t" style="left:247px;top:168px;color:#13136e;letter-spacing:0.011px;">Каста-Быль в Глаза (2008)</div>
<div class="ic" style="left:230px;top:184px"><svg width="16" height="16" viewBox="0 0 16 16">
<defs><linearGradient id="fg" x1="0" y1="0" x2="0" y2="1"><stop offset="0" stop-color="#b9d3f1"/><stop offset=".6" stop-color="#9cc0ea"/><stop offset="1" stop-color="#c9dff5"/></linearGradient></defs>
<path d="M2.5 .9 L11.6 .9 L12.9 2 L12.9 13.6 L2.5 13.6Z" fill="#f1f6fc" stroke="#c3d2e6" stroke-width=".9"/>
<rect x="3.3" y="2.2" width="7.8" height="10.6" fill="url(#fg)"/>
<path d="M4.2 2.6 L8 2.6 L11 9.5 L11 12.6 L8.5 11 L6.5 7.5 L4.5 6.5Z" fill="#6f9fdc" opacity=".55"/>
<path d="M11.1 2.2 L12.5 3.6 L12.3 10.5 L11.1 12.8Z" fill="#d4e3f5"/>
</svg></div>
<div class="t" style="left:247px;top:185px;color:#13136e;letter-spacing:-0.342px;">Aero Glass</div>
<div class="ic" style="left:230px;top:201px"><svg width="16" height="16" viewBox="0 0 16 16">
<defs><linearGradient id="fg" x1="0" y1="0" x2="0" y2="1"><stop offset="0" stop-color="#b9d3f1"/><stop offset=".6" stop-color="#9cc0ea"/><stop offset="1" stop-color="#c9dff5"/></linearGradient></defs>
<path d="M2.5 .9 L11.6 .9 L12.9 2 L12.9 13.6 L2.5 13.6Z" fill="#f1f6fc" stroke="#c3d2e6" stroke-width=".9"/>
<rect x="3.3" y="2.2" width="7.8" height="10.6" fill="url(#fg)"/>
<path d="M4.2 2.6 L8 2.6 L11 9.5 L11 12.6 L8.5 11 L6.5 7.5 L4.5 6.5Z" fill="#6f9fdc" opacity=".55"/>
<path d="M11.1 2.2 L12.5 3.6 L12.3 10.5 L11.1 12.8Z" fill="#d4e3f5"/>
</svg></div>
<div class="t" style="left:247px;top:202px;color:#13136e;letter-spacing:-0.066px;">TrueTransparency</div>
<div class="ic" style="left:230px;top:218px"><svg width="16" height="16" viewBox="0 0 16 16">
<path d="M4.2 14.6 C2.6 10.6 3.6 6.8 5.6 5.4 C4.4 3.6 5.6 1.2 7.4 2.4 C8.6 1.4 10.6 1.6 11 3 C13.6 3.4 13.6 7 11.6 8 C13.6 10 13.4 13.4 11.4 14.6Z" fill="#eeeeea" stroke="#a6a69e" stroke-width=".8"/>
<circle cx="7.6" cy="5.8" r=".9" fill="#555"/><circle cx="10.2" cy="5.6" r=".8" fill="#555"/>
<path d="M6 10.4 q2.6 1.8 5 0" stroke="#8c8c8c" fill="none" stroke-width=".8"/>
<path d="M1.4 3 L3.4 6 L2.4 9" stroke="#c4c4bc" fill="none" stroke-width=".8"/>
</svg></div>
<div class="t" style="left:247px;top:219px;color:#13136e;letter-spacing:0.463px;">wofty</div>
<div class="ic" style="left:230px;top:235px"><svg width="16" height="16" viewBox="0 0 16 16">
<path d="M1.4 3.4 L6 1 L14.4 2.6 L14.8 11 L10 15 L1.8 13Z" fill="#6a3480" stroke="#3a1650" stroke-width=".8"/>
<path d="M7 2 L13.8 3.2 L14 9.6 L9.6 8.4Z" fill="#58b040"/>
<path d="M3 5 L6.4 4 L7 8 L3.6 9Z" fill="#d8c8e4"/>
<path d="M4 10 L9 9.4 L9.6 13.6 L4.6 12.6Z" fill="#3c1c50"/>
</svg></div>
<div class="t" style="left:247px;top:236px;color:#13136e;letter-spacing:-0.102px;">widgetsus</div>
<div class="ic" style="left:230px;top:252px"><svg width="16" height="16" viewBox="0 0 16 16">
<path d="M6.2 .3 L13.8 7.4 L12.9 9.4 L4.3 9.4 L.3 5.9Z" fill="#7484ac" stroke="#39435f" stroke-width=".9"/>
<path d="M2.4 6.4 L7.4 1.8 M4.6 8.2 L9.4 3.6 M7.4 9 L11.2 5.6" stroke="#b4c2e6" stroke-width="1.1"/>
<rect x="3.3" y="9.4" width="10.4" height="5.1" rx="1.8" fill="#f6f6f2" stroke="#383838" stroke-width="1"/>
</svg></div>
<div class="t" style="left:247px;top:253px;color:#13136e;letter-spacing:-0.022px;">Вовка в Тридевятом царстве</div>
<div class="ic" style="left:230px;top:269px"><svg width="16" height="16" viewBox="0 0 16 16">
<rect x=".6" y="1.4" width="15" height="11.6" fill="#4f84d6" stroke="#28344c" stroke-width="1.1"/>
<path d="M1.2 12.4 L1.2 8 L7 12.4Z" fill="#9cc2f0"/>
<rect x="1" y="12.2" width="14.2" height="1.3" fill="#3c4658"/>
</svg></div>
<div class="t" style="left:247px;top:270px;color:#13136e;letter-spacing:-0.370px;">ViGlance OneStep</div>
<div class="ic" style="left:229px;top:285px"><svg width="16" height="16" viewBox="0 0 16 16">
<path d="M.4 3.4 L5.1 6.8 L5.1 15.4 L.4 12Z" fill="#f4efe4" stroke="#111" stroke-width=".8"/>
<path d="M.4 6.2 L5.1 9.4 M.4 9 L5.1 12.1" stroke="#111" stroke-width=".9"/>
<path d="M.4 .9 L11.6 .3 L15.7 3.7 L5.1 4.4Z" fill="#6c1230" stroke="#1c0410" stroke-width=".8"/>
<path d="M.4 .9 L5.1 4.4 L5.1 6.8 L.4 3.4Z" fill="#f4ece0" stroke="#111" stroke-width=".8"/>
<rect x="5.1" y="4.3" width="10.7" height="2.9" fill="#b01c5c" stroke="#20040f" stroke-width=".8"/>
<rect x="5.8" y="4.9" width="9.2" height=".9" fill="#f58cb8"/>
<rect x="5.1" y="8" width="10.7" height="3" fill="#236c8c" stroke="#04141c" stroke-width=".8"/>
<rect x="5.8" y="8.5" width="9.2" height=".9" fill="#8ed0e6"/>
<rect x="5.1" y="11.9" width="10.7" height="3.4" fill="#16804e" stroke="#02180c" stroke-width=".8"/>
<rect x="5.8" y="12.5" width="9.2" height=".9" fill="#7fd6a6"/>
</svg></div>
<div class="t" style="left:247px;top:287px;color:#13136e;letter-spacing:0.103px;">wofty pack</div>
<div class="ic" style="left:230px;top:303px"><svg width="16" height="16" viewBox="0 0 16 16">
<ellipse cx="8" cy="8.3" rx="7" ry="3.6" fill="#fafafa" stroke="#6c6c6c" stroke-width="1.3" transform="rotate(20 8 8.3)"/>
<ellipse cx="8.2" cy="8.6" rx="4.4" ry="1.7" fill="#fff" stroke="#b4b4b4" stroke-width=".7" transform="rotate(20 8.2 8.6)"/>
</svg></div>
<div class="t" style="left:247px;top:304px;color:#13136e;letter-spacing:-0.421px;">octosetup_vSMOOTHLOUNGE_owd</div>
<div class="ic" style="left:230px;top:320px"><svg width="16" height="16" viewBox="0 0 16 16">
<ellipse cx="7.6" cy="13.2" rx="5.2" ry=".9" fill="#c6c6c6"/>
<path d="M8.6 0 L14.2 5.4 L8.6 11.2 L8.1 12.8 L7.4 11 L3 10.6 L5 8.6 L1.9 6Z" fill="#5e5e5e"/>
<path d="M4.2 7.6 L10.6 2 M6 9.6 L12.6 4" stroke="#ececec" stroke-width="1.25" fill="none"/>
<path d="M2.4 6 L8.6 .4 L14 5.4" fill="none" stroke="#7c7c7c" stroke-width=".6"/>
</svg></div>
<div class="t" style="left:247px;top:321px;color:#13136e;letter-spacing:-0.026px;">Маста и Белый feat. Родион Роус, Yasha (Production - Masta, Al.C.) - Один шаг</div>
<div class="ic" style="left:230px;top:337px"><svg width="16" height="16" viewBox="0 0 16 16">
<ellipse cx="7.6" cy="13.2" rx="5.2" ry=".9" fill="#c6c6c6"/>
<path d="M8.6 0 L14.2 5.4 L8.6 11.2 L8.1 12.8 L7.4 11 L3 10.6 L5 8.6 L1.9 6Z" fill="#5e5e5e"/>
<path d="M4.2 7.6 L10.6 2 M6 9.6 L12.6 4" stroke="#ececec" stroke-width="1.25" fill="none"/>
<path d="M2.4 6 L8.6 .4 L14 5.4" fill="none" stroke="#7c7c7c" stroke-width=".6"/>
</svg></div>
<div class="t" style="left:247px;top:338px;color:#13136e;letter-spacing:-0.105px;">Dj Miller  - i love you baby</div>
<div class="ic" style="left:230px;top:354px"><svg width="16" height="16" viewBox="0 0 16 16">
<ellipse cx="7.6" cy="13.2" rx="5.2" ry=".9" fill="#c6c6c6"/>
<path d="M8.6 0 L14.2 5.4 L8.6 11.2 L8.1 12.8 L7.4 11 L3 10.6 L5 8.6 L1.9 6Z" fill="#5e5e5e"/>
<path d="M4.2 7.6 L10.6 2 M6 9.6 L12.6 4" stroke="#ececec" stroke-width="1.25" fill="none"/>
<path d="M2.4 6 L8.6 .4 L14 5.4" fill="none" stroke="#7c7c7c" stroke-width=".6"/>
</svg></div>
<div class="t" style="left:247px;top:355px;color:#13136e;letter-spacing:-0.069px;">Jazz Chillout - I love you baby</div>
<div class="ic" style="left:230px;top:371px"><svg width="16" height="16" viewBox="0 0 16 16">
<ellipse cx="7.6" cy="13.2" rx="5.2" ry=".9" fill="#c6c6c6"/>
<path d="M8.6 0 L14.2 5.4 L8.6 11.2 L8.1 12.8 L7.4 11 L3 10.6 L5 8.6 L1.9 6Z" fill="#5e5e5e"/>
<path d="M4.2 7.6 L10.6 2 M6 9.6 L12.6 4" stroke="#ececec" stroke-width="1.25" fill="none"/>
<path d="M2.4 6 L8.6 .4 L14 5.4" fill="none" stroke="#7c7c7c" stroke-width=".6"/>
</svg></div>
<div class="t" style="left:247px;top:372px;color:#13136e;letter-spacing:-0.094px;">Muse - i love you baby</div>
<div class="ic" style="left:230px;top:388px"><svg width="16" height="16" viewBox="0 0 16 16">
<ellipse cx="7.6" cy="13.2" rx="5.2" ry=".9" fill="#c6c6c6"/>
<path d="M8.6 0 L14.2 5.4 L8.6 11.2 L8.1 12.8 L7.4 11 L3 10.6 L5 8.6 L1.9 6Z" fill="#5e5e5e"/>
<path d="M4.2 7.6 L10.6 2 M6 9.6 L12.6 4" stroke="#ececec" stroke-width="1.25" fill="none"/>
<path d="M2.4 6 L8.6 .4 L14 5.4" fill="none" stroke="#7c7c7c" stroke-width=".6"/>
</svg></div>
<div class="t" style="left:247px;top:389px;color:#13136e;letter-spacing:-0.124px;">Ради славы - Лучший сон</div>
<div class="ic" style="left:230px;top:405px"><svg width="16" height="16" viewBox="0 0 16 16">
<ellipse cx="7.6" cy="13.2" rx="5.2" ry=".9" fill="#c6c6c6"/>
<path d="M8.6 0 L14.2 5.4 L8.6 11.2 L8.1 12.8 L7.4 11 L3 10.6 L5 8.6 L1.9 6Z" fill="#5e5e5e"/>
<path d="M4.2 7.6 L10.6 2 M6 9.6 L12.6 4" stroke="#ececec" stroke-width="1.25" fill="none"/>
<path d="M2.4 6 L8.6 .4 L14 5.4" fill="none" stroke="#7c7c7c" stroke-width=".6"/>
</svg></div>
<div class="t" style="left:247px;top:406px;color:#13136e;letter-spacing:-0.045px;">Все обиды я уже давно забыла</div>
<div class="ic" style="left:230px;top:422px"><svg width="16" height="16" viewBox="0 0 16 16">
<ellipse cx="7.6" cy="13.2" rx="5.2" ry=".9" fill="#c6c6c6"/>
<path d="M8.6 0 L14.2 5.4 L8.6 11.2 L8.1 12.8 L7.4 11 L3 10.6 L5 8.6 L1.9 6Z" fill="#5e5e5e"/>
<path d="M4.2 7.6 L10.6 2 M6 9.6 L12.6 4" stroke="#ececec" stroke-width="1.25" fill="none"/>
<path d="M2.4 6 L8.6 .4 L14 5.4" fill="none" stroke="#7c7c7c" stroke-width=".6"/>
</svg></div>
<div class="t" style="left:247px;top:423px;color:#13136e;letter-spacing:-0.037px;">AySel &amp; Arash - Always [Azerbaijan]</div>
<div class="ic" style="left:230px;top:439px"><svg width="16" height="16" viewBox="0 0 16 16">
<rect x=".6" y="1.6" width="14.8" height="11.8" fill="#fbfcfe" stroke="#c4cedc" stroke-width=".9"/>
<rect x="1.2" y="2.2" width="13.6" height="2.6" fill="#9cc2f0"/>
<rect x="8.6" y="5.6" width="5.6" height="5" fill="#8cb6ea"/>
<rect x="2.4" y="6" width="3.4" height="2" fill="#3c4a60"/>
<path d="M2.4 10h5M2.4 11.6h9" stroke="#c2cede" stroke-width=".9"/>
</svg></div>
<div class="t" style="left:247px;top:440px;color:#13136e;letter-spacing:-0.272px;">Димон</div>
<div class="ic" style="left:230px;top:456px"><svg width="16" height="16" viewBox="0 0 16 16">
<rect x="1" y="1.5" width="11" height="11" fill="#555" stroke="#222" stroke-width="1"/>
<path d="M1.5 2 L8 2 L1.5 9Z" fill="#999"/>
<circle cx="10.5" cy="10.5" r="4.3" fill="#dcdcdc" stroke="#666" stroke-width="1"/>
<circle cx="10.5" cy="10.5" r="1.4" fill="#fff" stroke="#777" stroke-width=".6"/>
</svg></div>
<div class="t" style="left:247px;top:457px;color:#13136e;letter-spacing:-0.164px;">Theme Patcher v 2.0</div>
<div class="ic" style="left:230px;top:473px"><svg width="16" height="16" viewBox="0 0 16 16">
<ellipse cx="7.6" cy="13.2" rx="5.2" ry=".9" fill="#c6c6c6"/>
<path d="M8.6 0 L14.2 5.4 L8.6 11.2 L8.1 12.8 L7.4 11 L3 10.6 L5 8.6 L1.9 6Z" fill="#5e5e5e"/>
<path d="M4.2 7.6 L10.6 2 M6 9.6 L12.6 4" stroke="#ececec" stroke-width="1.25" fill="none"/>
<path d="M2.4 6 L8.6 .4 L14 5.4" fill="none" stroke="#7c7c7c" stroke-width=".6"/>
</svg></div>
<div class="t" style="left:247px;top:474px;color:#13136e;letter-spacing:-0.112px;">abba_-_summer_night_city</div>
<div class="ic" style="left:230px;top:490px"><svg width="16" height="16" viewBox="0 0 16 16">
<path d="M6.2 .3 L13.8 7.4 L12.9 9.4 L4.3 9.4 L.3 5.9Z" fill="#7484ac" stroke="#39435f" stroke-width=".9"/>
<path d="M2.4 6.4 L7.4 1.8 M4.6 8.2 L9.4 3.6 M7.4 9 L11.2 5.6" stroke="#b4c2e6" stroke-width="1.1"/>
<rect x="3.3" y="9.4" width="10.4" height="5.1" rx="1.8" fill="#f6f6f2" stroke="#383838" stroke-width="1"/>
</svg></div>
<div class="t" style="left:247px;top:491px;color:#13136e;letter-spacing:-0.108px;">Pixar - Partly Cloudy</div>
<div class="ic" style="left:230px;top:507px"><svg width="16" height="16" viewBox="0 0 16 16">
<ellipse cx="7.6" cy="13.2" rx="5.2" ry=".9" fill="#c6c6c6"/>
<path d="M8.6 0 L14.2 5.4 L8.6 11.2 L8.1 12.8 L7.4 11 L3 10.6 L5 8.6 L1.9 6Z" fill="#5e5e5e"/>
<path d="M4.2 7.6 L10.6 2 M6 9.6 L12.6 4" stroke="#ececec" stroke-width="1.25" fill="none"/>
<path d="M2.4 6 L8.6 .4 L14 5.4" fill="none" stroke="#7c7c7c" stroke-width=".6"/>
</svg></div>
<div class="t" style="left:247px;top:508px;color:#13136e;letter-spacing:0.071px;">Доминик Джокер - Если Это Любовь (feat. Хатуна)</div>
<div class="ic" style="left:230px;top:524px"><svg width="16" height="16" viewBox="0 0 16 16">
<ellipse cx="7.6" cy="13.2" rx="5.2" ry=".9" fill="#c6c6c6"/>
<path d="M8.6 0 L14.2 5.4 L8.6 11.2 L8.1 12.8 L7.4 11 L3 10.6 L5 8.6 L1.9 6Z" fill="#5e5e5e"/>
<path d="M4.2 7.6 L10.6 2 M6 9.6 L12.6 4" stroke="#ececec" stroke-width="1.25" fill="none"/>
<path d="M2.4 6 L8.6 .4 L14 5.4" fill="none" stroke="#7c7c7c" stroke-width=".6"/>
</svg></div>
<div class="t" style="left:247px;top:525px;color:#13136e;">1 - А полетели в небо</div>
<div class="ic" style="left:230px;top:541px"><svg width="16" height="16" viewBox="0 0 16 16">
<ellipse cx="7.6" cy="13.2" rx="5.2" ry=".9" fill="#c6c6c6"/>
<path d="M8.6 0 L14.2 5.4 L8.6 11.2 L8.1 12.8 L7.4 11 L3 10.6 L5 8.6 L1.9 6Z" fill="#5e5e5e"/>
<path d="M4.2 7.6 L10.6 2 M6 9.6 L12.6 4" stroke="#ececec" stroke-width="1.25" fill="none"/>
<path d="M2.4 6 L8.6 .4 L14 5.4" fill="none" stroke="#7c7c7c" stroke-width=".6"/>
</svg></div>
<div class="t" style="left:247px;top:542px;color:#13136e;letter-spacing:-0.085px;">Тимати В.К - Про Лысых</div>
<div class="ic" style="left:230px;top:558px"><svg width="16" height="16" viewBox="0 0 16 16">
<ellipse cx="7.6" cy="13.2" rx="5.2" ry=".9" fill="#c6c6c6"/>
<path d="M8.6 0 L14.2 5.4 L8.6 11.2 L8.1 12.8 L7.4 11 L3 10.6 L5 8.6 L1.9 6Z" fill="#5e5e5e"/>
<path d="M4.2 7.6 L10.6 2 M6 9.6 L12.6 4" stroke="#ececec" stroke-width="1.25" fill="none"/>
<path d="M2.4 6 L8.6 .4 L14 5.4" fill="none" stroke="#7c7c7c" stroke-width=".6"/>
</svg></div>
<div class="t" style="left:247px;top:559px;color:#13136e;letter-spacing:-0.071px;">Тимати feat. Geegun - Одноклассница</div>
<div class="ic" style="left:653px;top:81px"><svg width="16" height="16" viewBox="0 0 16 16">
<path d="M.4 3.4 L5.1 6.8 L5.1 15.4 L.4 12Z" fill="#f4efe4" stroke="#111" stroke-width=".8"/>
<path d="M.4 6.2 L5.1 9.4 M.4 9 L5.1 12.1" stroke="#111" stroke-width=".9"/>
<path d="M.4 .9 L11.6 .3 L15.7 3.7 L5.1 4.4Z" fill="#6c1230" stroke="#1c0410" stroke-width=".8"/>
<path d="M.4 .9 L5.1 4.4 L5.1 6.8 L.4 3.4Z" fill="#f4ece0" stroke="#111" stroke-width=".8"/>
<rect x="5.1" y="4.3" width="10.7" height="2.9" fill="#b01c5c" stroke="#20040f" stroke-width=".8"/>
<rect x="5.8" y="4.9" width="9.2" height=".9" fill="#f58cb8"/>
<rect x="5.1" y="8" width="10.7" height="3" fill="#236c8c" stroke="#04141c" stroke-width=".8"/>
<rect x="5.8" y="8.5" width="9.2" height=".9" fill="#8ed0e6"/>
<rect x="5.1" y="11.9" width="10.7" height="3.4" fill="#16804e" stroke="#02180c" stroke-width=".8"/>
<rect x="5.8" y="12.5" width="9.2" height=".9" fill="#7fd6a6"/>
</svg></div>
<div class="t" style="left:671px;top:83px;color:#13136e;letter-spacing:-0.217px;">Cursors</div>
<div class="ic" style="left:653px;top:98px"><svg width="16" height="16" viewBox="0 0 16 16">
<path d="M.4 3.4 L5.1 6.8 L5.1 15.4 L.4 12Z" fill="#f4efe4" stroke="#111" stroke-width=".8"/>
<path d="M.4 6.2 L5.1 9.4 M.4 9 L5.1 12.1" stroke="#111" stroke-width=".9"/>
<path d="M.4 .9 L11.6 .3 L15.7 3.7 L5.1 4.4Z" fill="#6c1230" stroke="#1c0410" stroke-width=".8"/>
<path d="M.4 .9 L5.1 4.4 L5.1 6.8 L.4 3.4Z" fill="#f4ece0" stroke="#111" stroke-width=".8"/>
<rect x="5.1" y="4.3" width="10.7" height="2.9" fill="#b01c5c" stroke="#20040f" stroke-width=".8"/>
<rect x="5.8" y="4.9" width="9.2" height=".9" fill="#f58cb8"/>
<rect x="5.1" y="8" width="10.7" height="3" fill="#236c8c" stroke="#04141c" stroke-width=".8"/>
<rect x="5.8" y="8.5" width="9.2" height=".9" fill="#8ed0e6"/>
<rect x="5.1" y="11.9" width="10.7" height="3.4" fill="#16804e" stroke="#02180c" stroke-width=".8"/>
<rect x="5.8" y="12.5" width="9.2" height=".9" fill="#7fd6a6"/>
</svg></div>
<div class="t" style="left:671px;top:100px;color:#13136e;letter-spacing:-0.100px;">soundsvista_2.5</div>
<div class="ic" style="left:653px;top:115px"><svg width="16" height="16" viewBox="0 0 16 16">
<path d="M.4 3.4 L5.1 6.8 L5.1 15.4 L.4 12Z" fill="#f4efe4" stroke="#111" stroke-width=".8"/>
<path d="M.4 6.2 L5.1 9.4 M.4 9 L5.1 12.1" stroke="#111" stroke-width=".9"/>
<path d="M.4 .9 L11.6 .3 L15.7 3.7 L5.1 4.4Z" fill="#6c1230" stroke="#1c0410" stroke-width=".8"/>
<path d="M.4 .9 L5.1 4.4 L5.1 6.8 L.4 3.4Z" fill="#f4ece0" stroke="#111" stroke-width=".8"/>
<rect x="5.1" y="4.3" width="10.7" height="2.9" fill="#b01c5c" stroke="#20040f" stroke-width=".8"/>
<rect x="5.8" y="4.9" width="9.2" height=".9" fill="#f58cb8"/>
<rect x="5.1" y="8" width="10.7" height="3" fill="#236c8c" stroke="#04141c" stroke-width=".8"/>
<rect x="5.8" y="8.5" width="9.2" height=".9" fill="#8ed0e6"/>
<rect x="5.1" y="11.9" width="10.7" height="3.4" fill="#16804e" stroke="#02180c" stroke-width=".8"/>
<rect x="5.8" y="12.5" width="9.2" height=".9" fill="#7fd6a6"/>
</svg></div>
<div class="t" style="left:671px;top:117px;color:#13136e;letter-spacing:-0.197px;">QTToolBar2.1.0.10</div>
<div class="ic" style="left:653px;top:132px"><svg width="16" height="16" viewBox="0 0 16 16">
<path d="M.4 3.4 L5.1 6.8 L5.1 15.4 L.4 12Z" fill="#f4efe4" stroke="#111" stroke-width=".8"/>
<path d="M.4 6.2 L5.1 9.4 M.4 9 L5.1 12.1" stroke="#111" stroke-width=".9"/>
<path d="M.4 .9 L11.6 .3 L15.7 3.7 L5.1 4.4Z" fill="#6c1230" stroke="#1c0410" stroke-width=".8"/>
<path d="M.4 .9 L5.1 4.4 L5.1 6.8 L.4 3.4Z" fill="#f4ece0" stroke="#111" stroke-width=".8"/>
<rect x="5.1" y="4.3" width="10.7" height="2.9" fill="#b01c5c" stroke="#20040f" stroke-width=".8"/>
<rect x="5.8" y="4.9" width="9.2" height=".9" fill="#f58cb8"/>
<rect x="5.1" y="8" width="10.7" height="3" fill="#236c8c" stroke="#04141c" stroke-width=".8"/>
<rect x="5.8" y="8.5" width="9.2" height=".9" fill="#8ed0e6"/>
<rect x="5.1" y="11.9" width="10.7" height="3.4" fill="#16804e" stroke="#02180c" stroke-width=".8"/>
<rect x="5.8" y="12.5" width="9.2" height=".9" fill="#7fd6a6"/>
</svg></div>
<div class="t" style="left:671px;top:134px;color:#13136e;letter-spacing:-0.342px;">Aero Glass</div>
<div class="ic" style="left:653px;top:149px"><svg width="16" height="16" viewBox="0 0 16 16">
<path d="M.4 3.4 L5.1 6.8 L5.1 15.4 L.4 12Z" fill="#f4efe4" stroke="#111" stroke-width=".8"/>
<path d="M.4 6.2 L5.1 9.4 M.4 9 L5.1 12.1" stroke="#111" stroke-width=".9"/>
<path d="M.4 .9 L11.6 .3 L15.7 3.7 L5.1 4.4Z" fill="#6c1230" stroke="#1c0410" stroke-width=".8"/>
<path d="M.4 .9 L5.1 4.4 L5.1 6.8 L.4 3.4Z" fill="#f4ece0" stroke="#111" stroke-width=".8"/>
<rect x="5.1" y="4.3" width="10.7" height="2.9" fill="#b01c5c" stroke="#20040f" stroke-width=".8"/>
<rect x="5.8" y="4.9" width="9.2" height=".9" fill="#f58cb8"/>
<rect x="5.1" y="8" width="10.7" height="3" fill="#236c8c" stroke="#04141c" stroke-width=".8"/>
<rect x="5.8" y="8.5" width="9.2" height=".9" fill="#8ed0e6"/>
<rect x="5.1" y="11.9" width="10.7" height="3.4" fill="#16804e" stroke="#02180c" stroke-width=".8"/>
<rect x="5.8" y="12.5" width="9.2" height=".9" fill="#7fd6a6"/>
</svg></div>
<div class="t" style="left:671px;top:151px;color:#13136e;letter-spacing:0.079px;">truetransparency-crystalxp.net-en-5139</div>
<div class="ic" style="left:653px;top:166px"><svg width="16" height="16" viewBox="0 0 16 16">
<path d="M.4 3.4 L5.1 6.8 L5.1 15.4 L.4 12Z" fill="#f4efe4" stroke="#111" stroke-width=".8"/>
<path d="M.4 6.2 L5.1 9.4 M.4 9 L5.1 12.1" stroke="#111" stroke-width=".9"/>
<path d="M.4 .9 L11.6 .3 L15.7 3.7 L5.1 4.4Z" fill="#6c1230" stroke="#1c0410" stroke-width=".8"/>
<path d="M.4 .9 L5.1 4.4 L5.1 6.8 L.4 3.4Z" fill="#f4ece0" stroke="#111" stroke-width=".8"/>
<rect x="5.1" y="4.3" width="10.7" height="2.9" fill="#b01c5c" stroke="#20040f" stroke-width=".8"/>
<rect x="5.8" y="4.9" width="9.2" height=".9" fill="#f58cb8"/>
<rect x="5.1" y="8" width="10.7" height="3" fill="#236c8c" stroke="#04141c" stroke-width=".8"/>
<rect x="5.8" y="8.5" width="9.2" height=".9" fill="#8ed0e6"/>
<rect x="5.1" y="11.9" width="10.7" height="3.4" fill="#16804e" stroke="#02180c" stroke-width=".8"/>
<rect x="5.8" y="12.5" width="9.2" height=".9" fill="#7fd6a6"/>
</svg></div>
<div class="t" style="left:671px;top:168px;color:#13136e;letter-spacing:-0.171px;">Theme_Patcher_v_2.0_</div>
<div class="ic" style="left:653px;top:183px"><svg width="16" height="16" viewBox="0 0 16 16">
<path d="M.4 3.4 L5.1 6.8 L5.1 15.4 L.4 12Z" fill="#f4efe4" stroke="#111" stroke-width=".8"/>
<path d="M.4 6.2 L5.1 9.4 M.4 9 L5.1 12.1" stroke="#111" stroke-width=".9"/>
<path d="M.4 .9 L11.6 .3 L15.7 3.7 L5.1 4.4Z" fill="#6c1230" stroke="#1c0410" stroke-width=".8"/>
<path d="M.4 .9 L5.1 4.4 L5.1 6.8 L.4 3.4Z" fill="#f4ece0" stroke="#111" stroke-width=".8"/>
<rect x="5.1" y="4.3" width="10.7" height="2.9" fill="#b01c5c" stroke="#20040f" stroke-width=".8"/>
<rect x="5.8" y="4.9" width="9.2" height=".9" fill="#f58cb8"/>
<rect x="5.1" y="8" width="10.7" height="3" fill="#236c8c" stroke="#04141c" stroke-width=".8"/>
<rect x="5.8" y="8.5" width="9.2" height=".9" fill="#8ed0e6"/>
<rect x="5.1" y="11.9" width="10.7" height="3.4" fill="#16804e" stroke="#02180c" stroke-width=".8"/>
<rect x="5.8" y="12.5" width="9.2" height=".9" fill="#7fd6a6"/>
</svg></div>
<div class="t" style="left:671px;top:185px;color:#13136e;letter-spacing:-0.312px;">Sbar</div>
<div class="ic" style="left:654px;top:200px"><svg width="16" height="16" viewBox="0 0 16 16">
<defs><radialGradient id="sbg" cx=".4" cy=".3" r=".8"><stop offset="0" stop-color="#a4a8ee"/><stop offset=".5" stop-color="#4a4cc0"/><stop offset="1" stop-color="#2a2a90"/></radialGradient></defs>
<circle cx="7.2" cy="7.3" r="6.5" fill="url(#sbg)"/>
<text x="7.2" y="11" text-anchor="middle" font-family="Liberation Sans, sans-serif" font-weight="bold" font-style="italic" font-size="10.5" fill="#fff">S</text>
</svg></div>
<div class="t" style="left:671px;top:202px;color:#13136e;letter-spacing:-0.189px;">Sbar1024Setup</div>
<div class="ic" style="left:653px;top:217px"><svg width="16" height="16" viewBox="0 0 16 16">
<path d="M.4 3.4 L5.1 6.8 L5.1 15.4 L.4 12Z" fill="#f4efe4" stroke="#111" stroke-width=".8"/>
<path d="M.4 6.2 L5.1 9.4 M.4 9 L5.1 12.1" stroke="#111" stroke-width=".9"/>
<path d="M.4 .9 L11.6 .3 L15.7 3.7 L5.1 4.4Z" fill="#6c1230" stroke="#1c0410" stroke-width=".8"/>
<path d="M.4 .9 L5.1 4.4 L5.1 6.8 L.4 3.4Z" fill="#f4ece0" stroke="#111" stroke-width=".8"/>
<rect x="5.1" y="4.3" width="10.7" height="2.9" fill="#b01c5c" stroke="#20040f" stroke-width=".8"/>
<rect x="5.8" y="4.9" width="9.2" height=".9" fill="#f58cb8"/>
<rect x="5.1" y="8" width="10.7" height="3" fill="#236c8c" stroke="#04141c" stroke-width=".8"/>
<rect x="5.8" y="8.5" width="9.2" height=".9" fill="#8ed0e6"/>
<rect x="5.1" y="11.9" width="10.7" height="3.4" fill="#16804e" stroke="#02180c" stroke-width=".8"/>
<rect x="5.8" y="12.5" width="9.2" height=".9" fill="#7fd6a6"/>
</svg></div>
<div class="t" style="left:671px;top:219px;color:#13136e;letter-spacing:-0.370px;">ViGlance OneStep</div>
<div class="ic" style="left:653px;top:235px"><svg width="16" height="16" viewBox="0 0 16 16">
<defs><linearGradient id="mag" x1="0" y1="0" x2="0" y2="1"><stop offset="0" stop-color="#f0b050"/><stop offset="1" stop-color="#b4541a"/></linearGradient></defs>
<circle cx="7.8" cy="8.4" r="7.2" fill="#fdf3e2"/>
<text x="7.8" y="13.4" text-anchor="middle" font-family="Liberation Sans, sans-serif" font-weight="bold" font-size="16.5" fill="url(#mag)" stroke="#c06a24" stroke-width=".7">@</text>
</svg></div>
<div class="t" style="left:671px;top:236px;color:#13136e;letter-spacing:-0.055px;">magentsetup</div>
<div class="ic" style="left:653px;top:251px"><svg width="16" height="16" viewBox="0 0 16 16">
<path d="M.4 3.4 L5.1 6.8 L5.1 15.4 L.4 12Z" fill="#f4efe4" stroke="#111" stroke-width=".8"/>
<path d="M.4 6.2 L5.1 9.4 M.4 9 L5.1 12.1" stroke="#111" stroke-width=".9"/>
<path d="M.4 .9 L11.6 .3 L15.7 3.7 L5.1 4.4Z" fill="#6c1230" stroke="#1c0410" stroke-width=".8"/>
<path d="M.4 .9 L5.1 4.4 L5.1 6.8 L.4 3.4Z" fill="#f4ece0" stroke="#111" stroke-width=".8"/>
<rect x="5.1" y="4.3" width="10.7" height="2.9" fill="#b01c5c" stroke="#20040f" stroke-width=".8"/>
<rect x="5.8" y="4.9" width="9.2" height=".9" fill="#f58cb8"/>
<rect x="5.1" y="8" width="10.7" height="3" fill="#236c8c" stroke="#04141c" stroke-width=".8"/>
<rect x="5.8" y="8.5" width="9.2" height=".9" fill="#8ed0e6"/>
<rect x="5.1" y="11.9" width="10.7" height="3.4" fill="#16804e" stroke="#02180c" stroke-width=".8"/>
<rect x="5.8" y="12.5" width="9.2" height=".9" fill="#7fd6a6"/>
</svg></div>
<div class="t" style="left:671px;top:253px;color:#13136e;letter-spacing:-0.128px;">StyleBuilderInstall</div>
<div class="ic" style="left:654px;top:268px"><svg width="16" height="16" viewBox="0 0 16 16">
<rect x=".2" y="1.4" width="15" height="12.6" fill="#2c6c8e" stroke="#1d5470" stroke-width=".8"/>
<rect x="2.6" y="2.6" width="2.8" height="9.6" fill="#f2f8fc"/><rect x="1.4" y="2.6" width="5.4" height="1.8" fill="#f2f8fc"/><rect x="1.6" y="10.8" width="5" height="1.5" fill="#f2f8fc"/>
<rect x="9.6" y="2.6" width="2.8" height="9.6" fill="#f2f8fc"/><rect x="8.4" y="2.6" width="5.4" height="1.8" fill="#f2f8fc"/><rect x="8.6" y="10.8" width="5" height="1.5" fill="#f2f8fc"/>
<rect x=".4" y="13" width="14.8" height="1.4" fill="#8fc0d8"/>
</svg></div>
<div class="t" style="left:671px;top:270px;color:#13136e;letter-spacing:-0.066px;">TrueTransparency</div>
<div class="ic" style="left:654px;top:286px"><svg width="16" height="16" viewBox="0 0 16 16">
<path d="M6.2 .3 L13.8 7.4 L12.9 9.4 L4.3 9.4 L.3 5.9Z" fill="#7484ac" stroke="#39435f" stroke-width=".9"/>
<path d="M2.4 6.4 L7.4 1.8 M4.6 8.2 L9.4 3.6 M7.4 9 L11.2 5.6" stroke="#b4c2e6" stroke-width="1.1"/>
<rect x="3.3" y="9.4" width="10.4" height="5.1" rx="1.8" fill="#f6f6f2" stroke="#383838" stroke-width="1"/>
</svg></div>
<div class="t" style="left:671px;top:287px;color:#13136e;letter-spacing:0.096px;">Гордон Кихот с Собчак</div>
<div class="ic" style="left:654px;top:303px"><svg width="16" height="16" viewBox="0 0 16 16">
<path d="M6.2 .3 L13.8 7.4 L12.9 9.4 L4.3 9.4 L.3 5.9Z" fill="#7484ac" stroke="#39435f" stroke-width=".9"/>
<path d="M2.4 6.4 L7.4 1.8 M4.6 8.2 L9.4 3.6 M7.4 9 L11.2 5.6" stroke="#b4c2e6" stroke-width="1.1"/>
<rect x="3.3" y="9.4" width="10.4" height="5.1" rx="1.8" fill="#f6f6f2" stroke="#383838" stroke-width="1"/>
</svg></div>
<div class="t" style="left:671px;top:304px;color:#13136e;letter-spacing:0.020px;">ff4e08aa75318746.vk</div>
<div class="ic" style="left:654px;top:320px"><svg width="16" height="16" viewBox="0 0 16 16">
<path d="M6.2 .3 L13.8 7.4 L12.9 9.4 L4.3 9.4 L.3 5.9Z" fill="#7484ac" stroke="#39435f" stroke-width=".9"/>
<path d="M2.4 6.4 L7.4 1.8 M4.6 8.2 L9.4 3.6 M7.4 9 L11.2 5.6" stroke="#b4c2e6" stroke-width="1.1"/>
<rect x="3.3" y="9.4" width="10.4" height="5.1" rx="1.8" fill="#f6f6f2" stroke="#383838" stroke-width="1"/>
</svg></div>
<div class="t" style="left:671px;top:321px;color:#13136e;letter-spacing:-0.177px;">Мужчины VS Женщины</div>
<div class="ic" style="left:654px;top:337px"><svg width="16" height="16" viewBox="0 0 16 16">
<path d="M6.2 .3 L13.8 7.4 L12.9 9.4 L4.3 9.4 L.3 5.9Z" fill="#7484ac" stroke="#39435f" stroke-width=".9"/>
<path d="M2.4 6.4 L7.4 1.8 M4.6 8.2 L9.4 3.6 M7.4 9 L11.2 5.6" stroke="#b4c2e6" stroke-width="1.1"/>
<rect x="3.3" y="9.4" width="10.4" height="5.1" rx="1.8" fill="#f6f6f2" stroke="#383838" stroke-width="1"/>
</svg></div>
<div class="t" style="left:671px;top:338px;color:#13136e;letter-spacing:-0.021px;">you never know when</div>
<div class="ic" style="left:654px;top:354px"><svg width="16" height="16" viewBox="0 0 16 16">
<path d="M6.2 .3 L13.8 7.4 L12.9 9.4 L4.3 9.4 L.3 5.9Z" fill="#7484ac" stroke="#39435f" stroke-width=".9"/>
<path d="M2.4 6.4 L7.4 1.8 M4.6 8.2 L9.4 3.6 M7.4 9 L11.2 5.6" stroke="#b4c2e6" stroke-width="1.1"/>
<rect x="3.3" y="9.4" width="10.4" height="5.1" rx="1.8" fill="#f6f6f2" stroke="#383838" stroke-width="1"/>
</svg></div>
<div class="t" style="left:671px;top:355px;color:#13136e;letter-spacing:-0.123px;">бледина</div>
<div class="ic" style="left:654px;top:371px"><svg width="16" height="16" viewBox="0 0 16 16">
<ellipse cx="7.6" cy="13.2" rx="5.2" ry=".9" fill="#c6c6c6"/>
<path d="M8.6 0 L14.2 5.4 L8.6 11.2 L8.1 12.8 L7.4 11 L3 10.6 L5 8.6 L1.9 6Z" fill="#5e5e5e"/>
<path d="M4.2 7.6 L10.6 2 M6 9.6 L12.6 4" stroke="#ececec" stroke-width="1.25" fill="none"/>
<path d="M2.4 6 L8.6 .4 L14 5.4" fill="none" stroke="#7c7c7c" stroke-width=".6"/>
</svg></div>
<div class="t" style="left:671px;top:372px;color:#13136e;letter-spacing:-0.091px;">blue_-_one_love</div>
<div class="ic" style="left:654px;top:388px"><svg width="16" height="16" viewBox="0 0 16 16">
<ellipse cx="7.6" cy="13.2" rx="5.2" ry=".9" fill="#c6c6c6"/>
<path d="M8.6 0 L14.2 5.4 L8.6 11.2 L8.1 12.8 L7.4 11 L3 10.6 L5 8.6 L1.9 6Z" fill="#5e5e5e"/>
<path d="M4.2 7.6 L10.6 2 M6 9.6 L12.6 4" stroke="#ececec" stroke-width="1.25" fill="none"/>
<path d="M2.4 6 L8.6 .4 L14 5.4" fill="none" stroke="#7c7c7c" stroke-width=".6"/>
</svg></div>
<div class="t" style="left:671px;top:389px;color:#13136e;letter-spacing:-0.055px;">soul_avengerz_feat._katherine_ellis_-_or</div>
<div class="ic" style="left:654px;top:405px"><svg width="16" height="16" viewBox="0 0 16 16">
<path d="M3 1.5 L10 1.5 L13 4.5 L13 14.5 L3 14.5Z" fill="#fafafa" stroke="#c4c4c4" stroke-width="1"/>
<path d="M10 1.5 L10 4.5 L13 4.5" fill="#eee" stroke="#c4c4c4" stroke-width=".8"/>
</svg></div>
<div class="t" style="left:671px;top:406px;color:#13136e;letter-spacing:0.115px;">YandexTraffic.1.0.2.0.Gadget</div>
<div class="ic" style="left:653px;top:421px"><svg width="16" height="16" viewBox="0 0 16 16">
<path d="M.4 3.4 L5.1 6.8 L5.1 15.4 L.4 12Z" fill="#f4efe4" stroke="#111" stroke-width=".8"/>
<path d="M.4 6.2 L5.1 9.4 M.4 9 L5.1 12.1" stroke="#111" stroke-width=".9"/>
<path d="M.4 .9 L11.6 .3 L15.7 3.7 L5.1 4.4Z" fill="#6c1230" stroke="#1c0410" stroke-width=".8"/>
<path d="M.4 .9 L5.1 4.4 L5.1 6.8 L.4 3.4Z" fill="#f4ece0" stroke="#111" stroke-width=".8"/>
<rect x="5.1" y="4.3" width="10.7" height="2.9" fill="#b01c5c" stroke="#20040f" stroke-width=".8"/>
<rect x="5.8" y="4.9" width="9.2" height=".9" fill="#f58cb8"/>
<rect x="5.1" y="8" width="10.7" height="3" fill="#236c8c" stroke="#04141c" stroke-width=".8"/>
<rect x="5.8" y="8.5" width="9.2" height=".9" fill="#8ed0e6"/>
<rect x="5.1" y="11.9" width="10.7" height="3.4" fill="#16804e" stroke="#02180c" stroke-width=".8"/>
<rect x="5.8" y="12.5" width="9.2" height=".9" fill="#7fd6a6"/>
</svg></div>
<div class="t" style="left:671px;top:423px;color:#13136e;letter-spacing:0.034px;">widget</div>
<div class="ic" style="left:653px;top:438px"><svg width="16" height="16" viewBox="0 0 16 16">
<path d="M.4 3.4 L5.1 6.8 L5.1 15.4 L.4 12Z" fill="#f4efe4" stroke="#111" stroke-width=".8"/>
<path d="M.4 6.2 L5.1 9.4 M.4 9 L5.1 12.1" stroke="#111" stroke-width=".9"/>
<path d="M.4 .9 L11.6 .3 L15.7 3.7 L5.1 4.4Z" fill="#6c1230" stroke="#1c0410" stroke-width=".8"/>
<path d="M.4 .9 L5.1 4.4 L5.1 6.8 L.4 3.4Z" fill="#f4ece0" stroke="#111" stroke-width=".8"/>
<rect x="5.1" y="4.3" width="10.7" height="2.9" fill="#b01c5c" stroke="#20040f" stroke-width=".8"/>
<rect x="5.8" y="4.9" width="9.2" height=".9" fill="#f58cb8"/>
<rect x="5.1" y="8" width="10.7" height="3" fill="#236c8c" stroke="#04141c" stroke-width=".8"/>
<rect x="5.8" y="8.5" width="9.2" height=".9" fill="#8ed0e6"/>
<rect x="5.1" y="11.9" width="10.7" height="3.4" fill="#16804e" stroke="#02180c" stroke-width=".8"/>
<rect x="5.8" y="12.5" width="9.2" height=".9" fill="#7fd6a6"/>
</svg></div>
<div class="t" style="left:671px;top:440px;color:#13136e;letter-spacing:0.070px;">YandexTraffic.wdgt</div>
<div class="ic" style="left:654px;top:456px"><svg width="16" height="16" viewBox="0 0 16 16">
<ellipse cx="7.6" cy="13.2" rx="5.2" ry=".9" fill="#c6c6c6"/>
<path d="M8.6 0 L14.2 5.4 L8.6 11.2 L8.1 12.8 L7.4 11 L3 10.6 L5 8.6 L1.9 6Z" fill="#5e5e5e"/>
<path d="M4.2 7.6 L10.6 2 M6 9.6 L12.6 4" stroke="#ececec" stroke-width="1.25" fill="none"/>
<path d="M2.4 6 L8.6 .4 L14 5.4" fill="none" stroke="#7c7c7c" stroke-width=".6"/>
</svg></div>
<div class="t" style="left:671px;top:457px;color:#13136e;letter-spacing:-0.400px;">Ради славы - ИЗМЕНА</div>
<div class="hs" style="left:4px;top:684px;width:223px"><div class="hth" style="left:18px;width:170px"><span></span></div><div class="ar l"></div><div class="ar r"></div></div>
<div class="hs" style="left:230px;top:588px;width:640px"><div class="hth" style="left:17px;width:300px"><span></span></div><div class="ar l"></div><div class="ar r"></div></div>
<div id="details"></div>
<div style="position:absolute;left:241px;top:621px;width:60px;height:66px"><svg width="60" height="66" viewBox="0 0 60 66"><defs><linearGradient id="bf1" x1="0" y1="0" x2=".3" y2="1"><stop offset="0" stop-color="#c3d3f3"/><stop offset=".55" stop-color="#8aaaea"/><stop offset="1" stop-color="#7d9fe6"/></linearGradient><linearGradient id="bf2" x1="0" y1="0" x2="1" y2="1"><stop offset="0" stop-color="#b9cbf3"/><stop offset="1" stop-color="#8eaceb"/></linearGradient><radialGradient id="bsh"><stop offset="0" stop-color="#667" stop-opacity=".35"/><stop offset="1" stop-color="#667" stop-opacity="0"/></radialGradient></defs><ellipse cx="46" cy="53" rx="9" ry="8" fill="url(#bsh)"/><path d="M17.3 6.5 L39 7.7 L39 57.8 L16.1 55.4Z" fill="url(#bf2)" stroke="#c9d7f3" stroke-width=".8"/><path d="M19 7 L30 7.4 L38.6 36 L38.6 52 L26 30Z" fill="#dfe8fa" opacity=".55"/><path d="M39 39.7 L42.7 39.7 L42.7 57.8 L39 57.8Z" fill="#d8e2f6" stroke="#b9c8e6" stroke-width=".6"/><path d="M2.9 3.5 L17.3 6.5 L15 62 L2.9 51.8Z" fill="url(#bf1)" stroke="#b4c6ec" stroke-width=".8"/></svg></div>
<div class="t" style="left:314px;top:628px;color:#1c5a94;letter-spacing:-0.225px;font-weight:bold;">Download</div>
<div class="t" style="left:314px;top:643px;color:#1c5a94;letter-spacing:-0.222px;">Папка с файлами</div>
<div class="t" style="left:314px;top:663px;color:#1c5a94;letter-spacing:-0.189px;">Атрибуты: Сжатый</div>
<div style="position:absolute;left:744px;top:630px;width:116px;height:58px"><svg width="116" height="58" viewBox="0 0 116 58"><path d="M0 50 C44 44 88 30 115 2 C96 28 60 46 0 50Z" fill="#fff" opacity=".38"/><path d="M14 52 C50 46 86 30 108 10" stroke="#fff" stroke-width="1" fill="none" opacity=".45"/><path d="M30 54 C58 48 86 34 104 14" stroke="#fff" stroke-width="1" fill="none" opacity=".4"/><path d="M46 56 C66 50 88 36 100 20" stroke="#fff" stroke-width="1" fill="none" opacity=".35"/><path d="M64 57 L80 40 M72 57 L80 40" stroke="#fff" stroke-width="1" opacity=".5"/></svg></div>
</div>
<div id="ann"></div>
</body></html>
